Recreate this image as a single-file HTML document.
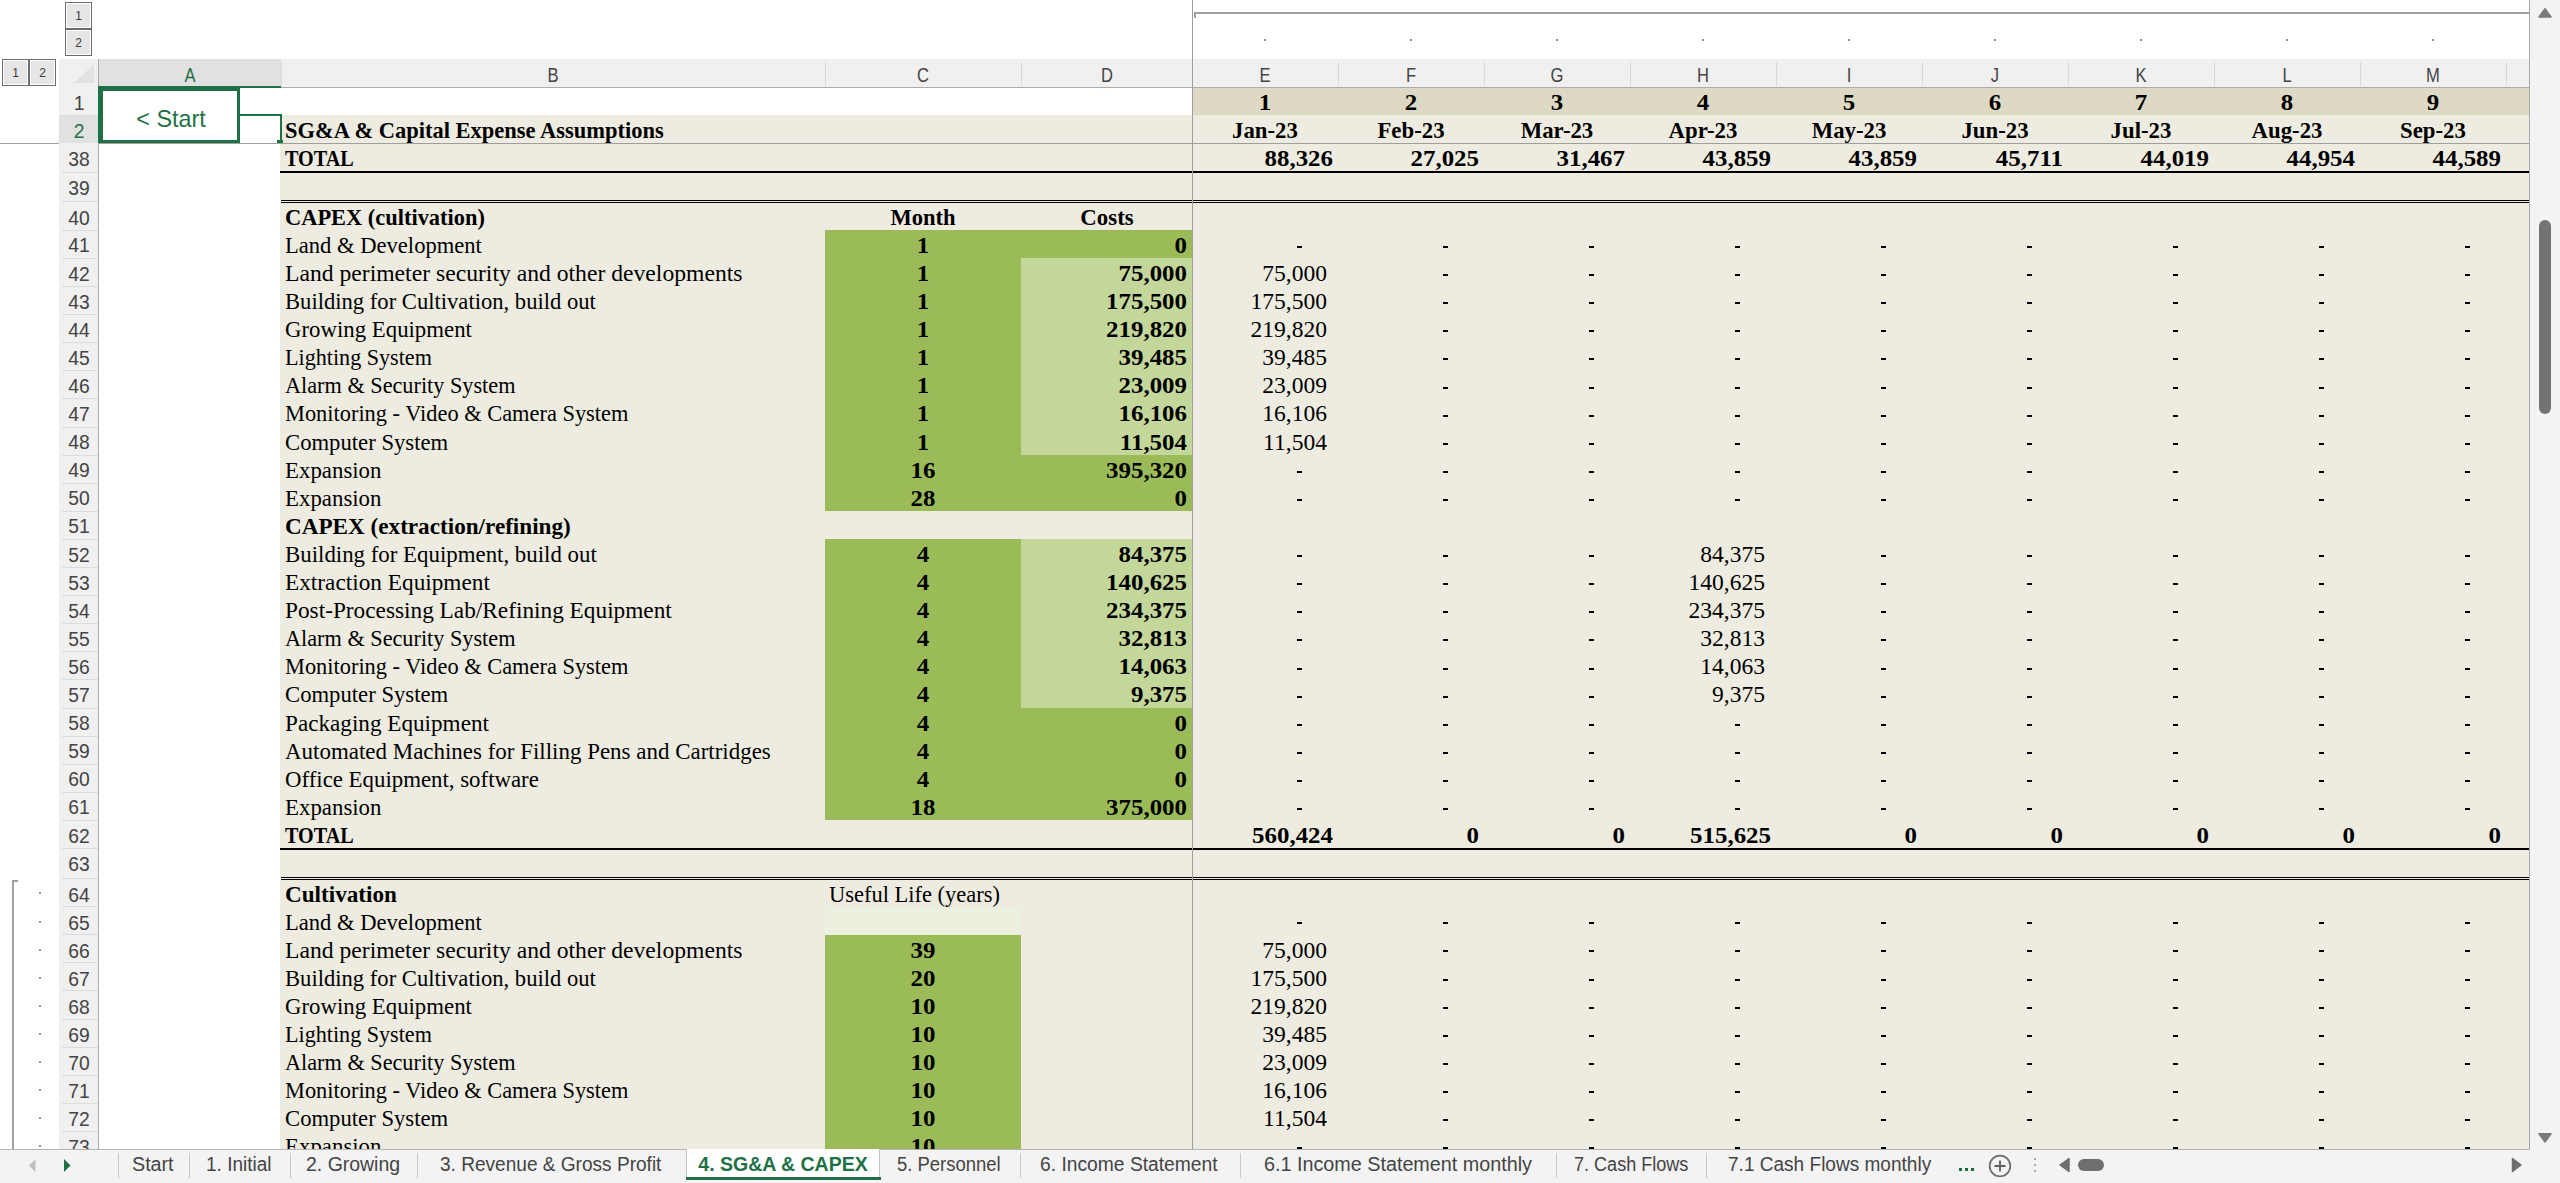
<!DOCTYPE html>
<html><head><meta charset="utf-8"><title>SG&amp;A &amp; CAPEX</title>
<style>
html,body{margin:0;padding:0;}
body{width:2560px;height:1183px;overflow:hidden;position:relative;background:#fff;}
body>div,body>svg{position:absolute;}
.t{white-space:nowrap;}
</style></head><body>
<div style="left:59.00px;top:59.00px;width:2470.00px;height:1090.00px;background:#FFFFFF;"></div>
<div style="left:280.00px;top:115.00px;width:2249.00px;height:1034.00px;background:#EEECE1;"></div>
<div style="left:1192.00px;top:87.00px;width:1337.00px;height:28.00px;background:#DDD9C4;"></div>
<div style="left:825.00px;top:230.00px;width:196.00px;height:28.00px;background:#9BBB59;"></div>
<div style="left:825.00px;top:258.00px;width:196.00px;height:29.00px;background:#9BBB59;"></div>
<div style="left:825.00px;top:287.00px;width:196.00px;height:28.00px;background:#9BBB59;"></div>
<div style="left:825.00px;top:315.00px;width:196.00px;height:28.00px;background:#9BBB59;"></div>
<div style="left:825.00px;top:343.00px;width:196.00px;height:28.00px;background:#9BBB59;"></div>
<div style="left:825.00px;top:371.00px;width:196.00px;height:28.00px;background:#9BBB59;"></div>
<div style="left:825.00px;top:399.00px;width:196.00px;height:28.00px;background:#9BBB59;"></div>
<div style="left:825.00px;top:427.00px;width:196.00px;height:28.00px;background:#9BBB59;"></div>
<div style="left:825.00px;top:455.00px;width:196.00px;height:28.00px;background:#9BBB59;"></div>
<div style="left:825.00px;top:483.00px;width:196.00px;height:28.00px;background:#9BBB59;"></div>
<div style="left:825.00px;top:539.00px;width:196.00px;height:29.00px;background:#9BBB59;"></div>
<div style="left:825.00px;top:568.00px;width:196.00px;height:28.00px;background:#9BBB59;"></div>
<div style="left:825.00px;top:596.00px;width:196.00px;height:28.00px;background:#9BBB59;"></div>
<div style="left:825.00px;top:624.00px;width:196.00px;height:28.00px;background:#9BBB59;"></div>
<div style="left:825.00px;top:652.00px;width:196.00px;height:28.00px;background:#9BBB59;"></div>
<div style="left:825.00px;top:680.00px;width:196.00px;height:28.00px;background:#9BBB59;"></div>
<div style="left:825.00px;top:708.00px;width:196.00px;height:28.00px;background:#9BBB59;"></div>
<div style="left:825.00px;top:736.00px;width:196.00px;height:28.00px;background:#9BBB59;"></div>
<div style="left:825.00px;top:764.00px;width:196.00px;height:28.00px;background:#9BBB59;"></div>
<div style="left:825.00px;top:792.00px;width:196.00px;height:28.00px;background:#9BBB59;"></div>
<div style="left:1021.00px;top:230.00px;width:171.00px;height:28.00px;background:#9BBB59;"></div>
<div style="left:1021.00px;top:455.00px;width:171.00px;height:28.00px;background:#9BBB59;"></div>
<div style="left:1021.00px;top:483.00px;width:171.00px;height:28.00px;background:#9BBB59;"></div>
<div style="left:1021.00px;top:708.00px;width:171.00px;height:28.00px;background:#9BBB59;"></div>
<div style="left:1021.00px;top:736.00px;width:171.00px;height:28.00px;background:#9BBB59;"></div>
<div style="left:1021.00px;top:764.00px;width:171.00px;height:28.00px;background:#9BBB59;"></div>
<div style="left:1021.00px;top:792.00px;width:171.00px;height:28.00px;background:#9BBB59;"></div>
<div style="left:1021.00px;top:258.00px;width:171.00px;height:29.00px;background:#C4D79B;"></div>
<div style="left:1021.00px;top:287.00px;width:171.00px;height:28.00px;background:#C4D79B;"></div>
<div style="left:1021.00px;top:315.00px;width:171.00px;height:28.00px;background:#C4D79B;"></div>
<div style="left:1021.00px;top:343.00px;width:171.00px;height:28.00px;background:#C4D79B;"></div>
<div style="left:1021.00px;top:371.00px;width:171.00px;height:28.00px;background:#C4D79B;"></div>
<div style="left:1021.00px;top:399.00px;width:171.00px;height:28.00px;background:#C4D79B;"></div>
<div style="left:1021.00px;top:427.00px;width:171.00px;height:28.00px;background:#C4D79B;"></div>
<div style="left:1021.00px;top:539.00px;width:171.00px;height:29.00px;background:#C4D79B;"></div>
<div style="left:1021.00px;top:568.00px;width:171.00px;height:28.00px;background:#C4D79B;"></div>
<div style="left:1021.00px;top:596.00px;width:171.00px;height:28.00px;background:#C4D79B;"></div>
<div style="left:1021.00px;top:624.00px;width:171.00px;height:28.00px;background:#C4D79B;"></div>
<div style="left:1021.00px;top:652.00px;width:171.00px;height:28.00px;background:#C4D79B;"></div>
<div style="left:1021.00px;top:680.00px;width:171.00px;height:28.00px;background:#C4D79B;"></div>
<div style="left:825.00px;top:907.00px;width:196.00px;height:28.00px;background:#EBF1DE;"></div>
<div style="left:825.00px;top:935.00px;width:196.00px;height:214.00px;background:#9BBB59;"></div>
<div style="left:280.00px;top:171.00px;width:2249.00px;height:2.00px;background:#000;"></div>
<div style="left:281.00px;top:200.00px;width:2248.00px;height:1.00px;background:#000;"></div>
<div style="left:281.00px;top:202.00px;width:2248.00px;height:1.00px;background:#000;"></div>
<div style="left:280.00px;top:848.00px;width:2249.00px;height:2.00px;background:#000;"></div>
<div style="left:281.00px;top:877.00px;width:2248.00px;height:1.00px;background:#000;"></div>
<div style="left:281.00px;top:879.00px;width:2248.00px;height:1.00px;background:#000;"></div>
<div class="t" style="left:285.40px;top:118.09px;width:900px;text-align:left;font-family:'Liberation Serif', serif;font-size:22.2px;line-height:26.64px;font-weight:bold;color:#000;transform:scaleX(1.0139111824505083);transform-origin:left 0;">SG&amp;A &amp; Capital Expense Assumptions</div>
<div class="t" style="left:285.40px;top:145.99px;width:900px;text-align:left;font-family:'Liberation Serif', serif;font-size:22.2px;line-height:26.64px;font-weight:bold;color:#000;transform:scaleX(0.9075297225891678);transform-origin:left 0;">TOTAL</div>
<div class="t" style="left:285.40px;top:204.99px;width:900px;text-align:left;font-family:'Liberation Serif', serif;font-size:22.2px;line-height:26.64px;font-weight:bold;color:#000;transform:scaleX(1.010611419909045);transform-origin:left 0;">CAPEX (cultivation)</div>
<div class="t" style="left:473.00px;top:204.99px;width:900px;text-align:center;font-family:'Liberation Serif', serif;font-size:22.2px;line-height:26.64px;font-weight:bold;color:#000;transform:scaleX(1.0171606864274572);transform-origin:center 0;">Month</div>
<div class="t" style="left:656.50px;top:204.99px;width:900px;text-align:center;font-family:'Liberation Serif', serif;font-size:22.2px;line-height:26.64px;font-weight:bold;color:#000;transform:scaleX(1.028957528957529);transform-origin:center 0;">Costs</div>
<div class="t" style="left:285.40px;top:232.89px;width:900px;text-align:left;font-family:'Liberation Serif', serif;font-size:22.2px;line-height:26.64px;font-weight:normal;color:#000;transform:scaleX(1.0175619834710745);transform-origin:left 0;">Land &amp; Development</div>
<div class="t" style="left:285.40px;top:260.99px;width:900px;text-align:left;font-family:'Liberation Serif', serif;font-size:22.2px;line-height:26.64px;font-weight:normal;color:#000;transform:scaleX(1.065409683426443);transform-origin:left 0;">Land perimeter security and other developments</div>
<div class="t" style="left:285.40px;top:289.09px;width:900px;text-align:left;font-family:'Liberation Serif', serif;font-size:22.2px;line-height:26.64px;font-weight:normal;color:#000;transform:scaleX(1.0190039318479687);transform-origin:left 0;">Building for Cultivation, build out</div>
<div class="t" style="left:285.40px;top:317.19px;width:900px;text-align:left;font-family:'Liberation Serif', serif;font-size:22.2px;line-height:26.64px;font-weight:normal;color:#000;transform:scaleX(1.02803738317757);transform-origin:left 0;">Growing Equipment</div>
<div class="t" style="left:285.40px;top:345.29px;width:900px;text-align:left;font-family:'Liberation Serif', serif;font-size:22.2px;line-height:26.64px;font-weight:normal;color:#000;transform:scaleX(0.9972862957937585);transform-origin:left 0;">Lighting System</div>
<div class="t" style="left:285.40px;top:373.39px;width:900px;text-align:left;font-family:'Liberation Serif', serif;font-size:22.2px;line-height:26.64px;font-weight:normal;color:#000;transform:scaleX(1.0026086956521738);transform-origin:left 0;">Alarm &amp; Security System</div>
<div class="t" style="left:285.40px;top:401.49px;width:900px;text-align:left;font-family:'Liberation Serif', serif;font-size:22.2px;line-height:26.64px;font-weight:normal;color:#000;transform:scaleX(1.0091042584434655);transform-origin:left 0;">Monitoring - Video &amp; Camera System</div>
<div class="t" style="left:285.40px;top:429.59px;width:900px;text-align:left;font-family:'Liberation Serif', serif;font-size:22.2px;line-height:26.64px;font-weight:normal;color:#000;transform:scaleX(1.0225422667501567);transform-origin:left 0;">Computer System</div>
<div class="t" style="left:285.40px;top:457.69px;width:900px;text-align:left;font-family:'Liberation Serif', serif;font-size:22.2px;line-height:26.64px;font-weight:normal;color:#000;transform:scaleX(1.0298826040554963);transform-origin:left 0;">Expansion</div>
<div class="t" style="left:285.40px;top:485.79px;width:900px;text-align:left;font-family:'Liberation Serif', serif;font-size:22.2px;line-height:26.64px;font-weight:normal;color:#000;transform:scaleX(1.0298826040554963);transform-origin:left 0;">Expansion</div>
<div class="t" style="left:285.40px;top:513.89px;width:900px;text-align:left;font-family:'Liberation Serif', serif;font-size:22.2px;line-height:26.64px;font-weight:bold;color:#000;transform:scaleX(1.0437956204379562);transform-origin:left 0;">CAPEX (extraction/refining)</div>
<div class="t" style="left:285.40px;top:541.99px;width:900px;text-align:left;font-family:'Liberation Serif', serif;font-size:22.2px;line-height:26.64px;font-weight:normal;color:#000;transform:scaleX(1.0303830911492735);transform-origin:left 0;">Building for Equipment, build out</div>
<div class="t" style="left:285.40px;top:570.09px;width:900px;text-align:left;font-family:'Liberation Serif', serif;font-size:22.2px;line-height:26.64px;font-weight:normal;color:#000;transform:scaleX(1.0491299897645854);transform-origin:left 0;">Extraction Equipment</div>
<div class="t" style="left:285.40px;top:598.19px;width:900px;text-align:left;font-family:'Liberation Serif', serif;font-size:22.2px;line-height:26.64px;font-weight:normal;color:#000;transform:scaleX(1.049633848657445);transform-origin:left 0;">Post-Processing Lab/Refining Equipment</div>
<div class="t" style="left:285.40px;top:626.29px;width:900px;text-align:left;font-family:'Liberation Serif', serif;font-size:22.2px;line-height:26.64px;font-weight:normal;color:#000;transform:scaleX(1.0026086956521738);transform-origin:left 0;">Alarm &amp; Security System</div>
<div class="t" style="left:285.40px;top:654.39px;width:900px;text-align:left;font-family:'Liberation Serif', serif;font-size:22.2px;line-height:26.64px;font-weight:normal;color:#000;transform:scaleX(1.0091042584434655);transform-origin:left 0;">Monitoring - Video &amp; Camera System</div>
<div class="t" style="left:285.40px;top:682.49px;width:900px;text-align:left;font-family:'Liberation Serif', serif;font-size:22.2px;line-height:26.64px;font-weight:normal;color:#000;transform:scaleX(1.0225422667501567);transform-origin:left 0;">Computer System</div>
<div class="t" style="left:285.40px;top:710.59px;width:900px;text-align:left;font-family:'Liberation Serif', serif;font-size:22.2px;line-height:26.64px;font-weight:normal;color:#000;transform:scaleX(1.0440122824974412);transform-origin:left 0;">Packaging Equipment</div>
<div class="t" style="left:285.40px;top:738.69px;width:900px;text-align:left;font-family:'Liberation Serif', serif;font-size:22.2px;line-height:26.64px;font-weight:normal;color:#000;transform:scaleX(1.0344827586206897);transform-origin:left 0;">Automated Machines for Filling Pens and Cartridges</div>
<div class="t" style="left:285.40px;top:766.79px;width:900px;text-align:left;font-family:'Liberation Serif', serif;font-size:22.2px;line-height:26.64px;font-weight:normal;color:#000;transform:scaleX(1.0291734197730955);transform-origin:left 0;">Office Equipment, software</div>
<div class="t" style="left:285.40px;top:794.89px;width:900px;text-align:left;font-family:'Liberation Serif', serif;font-size:22.2px;line-height:26.64px;font-weight:normal;color:#000;transform:scaleX(1.0298826040554963);transform-origin:left 0;">Expansion</div>
<div class="t" style="left:285.40px;top:822.99px;width:900px;text-align:left;font-family:'Liberation Serif', serif;font-size:22.2px;line-height:26.64px;font-weight:bold;color:#000;transform:scaleX(0.9075297225891678);transform-origin:left 0;">TOTAL</div>
<div class="t" style="left:285.40px;top:882.09px;width:900px;text-align:left;font-family:'Liberation Serif', serif;font-size:22.2px;line-height:26.64px;font-weight:bold;color:#000;transform:scaleX(1.043802423112768);transform-origin:left 0;">Cultivation</div>
<div class="t" style="left:829.20px;top:882.09px;width:900px;text-align:left;font-family:'Liberation Serif', serif;font-size:22.2px;line-height:26.64px;font-weight:normal;color:#000;transform:scaleX(1.0124333925399644);transform-origin:left 0;">Useful Life (years)</div>
<div class="t" style="left:285.40px;top:909.99px;width:900px;text-align:left;font-family:'Liberation Serif', serif;font-size:22.2px;line-height:26.64px;font-weight:normal;color:#000;transform:scaleX(1.0175619834710745);transform-origin:left 0;">Land &amp; Development</div>
<div class="t" style="left:285.40px;top:938.03px;width:900px;text-align:left;font-family:'Liberation Serif', serif;font-size:22.2px;line-height:26.64px;font-weight:normal;color:#000;transform:scaleX(1.065409683426443);transform-origin:left 0;">Land perimeter security and other developments</div>
<div class="t" style="left:285.40px;top:966.07px;width:900px;text-align:left;font-family:'Liberation Serif', serif;font-size:22.2px;line-height:26.64px;font-weight:normal;color:#000;transform:scaleX(1.0190039318479687);transform-origin:left 0;">Building for Cultivation, build out</div>
<div class="t" style="left:285.40px;top:994.11px;width:900px;text-align:left;font-family:'Liberation Serif', serif;font-size:22.2px;line-height:26.64px;font-weight:normal;color:#000;transform:scaleX(1.02803738317757);transform-origin:left 0;">Growing Equipment</div>
<div class="t" style="left:285.40px;top:1022.15px;width:900px;text-align:left;font-family:'Liberation Serif', serif;font-size:22.2px;line-height:26.64px;font-weight:normal;color:#000;transform:scaleX(0.9972862957937585);transform-origin:left 0;">Lighting System</div>
<div class="t" style="left:285.40px;top:1050.19px;width:900px;text-align:left;font-family:'Liberation Serif', serif;font-size:22.2px;line-height:26.64px;font-weight:normal;color:#000;transform:scaleX(1.0026086956521738);transform-origin:left 0;">Alarm &amp; Security System</div>
<div class="t" style="left:285.40px;top:1078.23px;width:900px;text-align:left;font-family:'Liberation Serif', serif;font-size:22.2px;line-height:26.64px;font-weight:normal;color:#000;transform:scaleX(1.0091042584434655);transform-origin:left 0;">Monitoring - Video &amp; Camera System</div>
<div class="t" style="left:285.40px;top:1106.27px;width:900px;text-align:left;font-family:'Liberation Serif', serif;font-size:22.2px;line-height:26.64px;font-weight:normal;color:#000;transform:scaleX(1.0225422667501567);transform-origin:left 0;">Computer System</div>
<div class="t" style="left:285.40px;top:1134.31px;width:900px;text-align:left;font-family:'Liberation Serif', serif;font-size:22.2px;line-height:26.64px;font-weight:normal;color:#000;transform:scaleX(1.0298826040554963);transform-origin:left 0;">Expansion</div>
<div class="t" style="left:473.00px;top:232.89px;width:900px;text-align:center;font-family:'Liberation Serif', serif;font-size:22.2px;line-height:26.64px;font-weight:bold;color:#000;transform:scaleX(1.123);transform-origin:center 0;">1</div>
<div class="t" style="left:473.00px;top:260.99px;width:900px;text-align:center;font-family:'Liberation Serif', serif;font-size:22.2px;line-height:26.64px;font-weight:bold;color:#000;transform:scaleX(1.123);transform-origin:center 0;">1</div>
<div class="t" style="left:473.00px;top:289.09px;width:900px;text-align:center;font-family:'Liberation Serif', serif;font-size:22.2px;line-height:26.64px;font-weight:bold;color:#000;transform:scaleX(1.123);transform-origin:center 0;">1</div>
<div class="t" style="left:473.00px;top:317.19px;width:900px;text-align:center;font-family:'Liberation Serif', serif;font-size:22.2px;line-height:26.64px;font-weight:bold;color:#000;transform:scaleX(1.123);transform-origin:center 0;">1</div>
<div class="t" style="left:473.00px;top:345.29px;width:900px;text-align:center;font-family:'Liberation Serif', serif;font-size:22.2px;line-height:26.64px;font-weight:bold;color:#000;transform:scaleX(1.123);transform-origin:center 0;">1</div>
<div class="t" style="left:473.00px;top:373.39px;width:900px;text-align:center;font-family:'Liberation Serif', serif;font-size:22.2px;line-height:26.64px;font-weight:bold;color:#000;transform:scaleX(1.123);transform-origin:center 0;">1</div>
<div class="t" style="left:473.00px;top:401.49px;width:900px;text-align:center;font-family:'Liberation Serif', serif;font-size:22.2px;line-height:26.64px;font-weight:bold;color:#000;transform:scaleX(1.123);transform-origin:center 0;">1</div>
<div class="t" style="left:473.00px;top:429.59px;width:900px;text-align:center;font-family:'Liberation Serif', serif;font-size:22.2px;line-height:26.64px;font-weight:bold;color:#000;transform:scaleX(1.123);transform-origin:center 0;">1</div>
<div class="t" style="left:473.00px;top:457.69px;width:900px;text-align:center;font-family:'Liberation Serif', serif;font-size:22.2px;line-height:26.64px;font-weight:bold;color:#000;transform:scaleX(1.123);transform-origin:center 0;">16</div>
<div class="t" style="left:473.00px;top:485.79px;width:900px;text-align:center;font-family:'Liberation Serif', serif;font-size:22.2px;line-height:26.64px;font-weight:bold;color:#000;transform:scaleX(1.123);transform-origin:center 0;">28</div>
<div class="t" style="left:473.00px;top:541.99px;width:900px;text-align:center;font-family:'Liberation Serif', serif;font-size:22.2px;line-height:26.64px;font-weight:bold;color:#000;transform:scaleX(1.123);transform-origin:center 0;">4</div>
<div class="t" style="left:473.00px;top:570.09px;width:900px;text-align:center;font-family:'Liberation Serif', serif;font-size:22.2px;line-height:26.64px;font-weight:bold;color:#000;transform:scaleX(1.123);transform-origin:center 0;">4</div>
<div class="t" style="left:473.00px;top:598.19px;width:900px;text-align:center;font-family:'Liberation Serif', serif;font-size:22.2px;line-height:26.64px;font-weight:bold;color:#000;transform:scaleX(1.123);transform-origin:center 0;">4</div>
<div class="t" style="left:473.00px;top:626.29px;width:900px;text-align:center;font-family:'Liberation Serif', serif;font-size:22.2px;line-height:26.64px;font-weight:bold;color:#000;transform:scaleX(1.123);transform-origin:center 0;">4</div>
<div class="t" style="left:473.00px;top:654.39px;width:900px;text-align:center;font-family:'Liberation Serif', serif;font-size:22.2px;line-height:26.64px;font-weight:bold;color:#000;transform:scaleX(1.123);transform-origin:center 0;">4</div>
<div class="t" style="left:473.00px;top:682.49px;width:900px;text-align:center;font-family:'Liberation Serif', serif;font-size:22.2px;line-height:26.64px;font-weight:bold;color:#000;transform:scaleX(1.123);transform-origin:center 0;">4</div>
<div class="t" style="left:473.00px;top:710.59px;width:900px;text-align:center;font-family:'Liberation Serif', serif;font-size:22.2px;line-height:26.64px;font-weight:bold;color:#000;transform:scaleX(1.123);transform-origin:center 0;">4</div>
<div class="t" style="left:473.00px;top:738.69px;width:900px;text-align:center;font-family:'Liberation Serif', serif;font-size:22.2px;line-height:26.64px;font-weight:bold;color:#000;transform:scaleX(1.123);transform-origin:center 0;">4</div>
<div class="t" style="left:473.00px;top:766.79px;width:900px;text-align:center;font-family:'Liberation Serif', serif;font-size:22.2px;line-height:26.64px;font-weight:bold;color:#000;transform:scaleX(1.123);transform-origin:center 0;">4</div>
<div class="t" style="left:473.00px;top:794.89px;width:900px;text-align:center;font-family:'Liberation Serif', serif;font-size:22.2px;line-height:26.64px;font-weight:bold;color:#000;transform:scaleX(1.123);transform-origin:center 0;">18</div>
<div class="t" style="left:473.00px;top:938.03px;width:900px;text-align:center;font-family:'Liberation Serif', serif;font-size:22.2px;line-height:26.64px;font-weight:bold;color:#000;transform:scaleX(1.123);transform-origin:center 0;">39</div>
<div class="t" style="left:473.00px;top:966.07px;width:900px;text-align:center;font-family:'Liberation Serif', serif;font-size:22.2px;line-height:26.64px;font-weight:bold;color:#000;transform:scaleX(1.123);transform-origin:center 0;">20</div>
<div class="t" style="left:473.00px;top:994.11px;width:900px;text-align:center;font-family:'Liberation Serif', serif;font-size:22.2px;line-height:26.64px;font-weight:bold;color:#000;transform:scaleX(1.123);transform-origin:center 0;">10</div>
<div class="t" style="left:473.00px;top:1022.15px;width:900px;text-align:center;font-family:'Liberation Serif', serif;font-size:22.2px;line-height:26.64px;font-weight:bold;color:#000;transform:scaleX(1.123);transform-origin:center 0;">10</div>
<div class="t" style="left:473.00px;top:1050.19px;width:900px;text-align:center;font-family:'Liberation Serif', serif;font-size:22.2px;line-height:26.64px;font-weight:bold;color:#000;transform:scaleX(1.123);transform-origin:center 0;">10</div>
<div class="t" style="left:473.00px;top:1078.23px;width:900px;text-align:center;font-family:'Liberation Serif', serif;font-size:22.2px;line-height:26.64px;font-weight:bold;color:#000;transform:scaleX(1.123);transform-origin:center 0;">10</div>
<div class="t" style="left:473.00px;top:1106.27px;width:900px;text-align:center;font-family:'Liberation Serif', serif;font-size:22.2px;line-height:26.64px;font-weight:bold;color:#000;transform:scaleX(1.123);transform-origin:center 0;">10</div>
<div class="t" style="left:473.00px;top:1134.31px;width:900px;text-align:center;font-family:'Liberation Serif', serif;font-size:22.2px;line-height:26.64px;font-weight:bold;color:#000;transform:scaleX(1.123);transform-origin:center 0;">10</div>
<div class="t" style="left:287.00px;top:232.89px;width:900px;text-align:right;font-family:'Liberation Serif', serif;font-size:22.2px;line-height:26.64px;font-weight:bold;color:#000;transform:scaleX(1.123);transform-origin:right 0;">0</div>
<div class="t" style="left:287.00px;top:260.99px;width:900px;text-align:right;font-family:'Liberation Serif', serif;font-size:22.2px;line-height:26.64px;font-weight:bold;color:#000;transform:scaleX(1.123);transform-origin:right 0;">75,000</div>
<div class="t" style="left:287.00px;top:289.09px;width:900px;text-align:right;font-family:'Liberation Serif', serif;font-size:22.2px;line-height:26.64px;font-weight:bold;color:#000;transform:scaleX(1.123);transform-origin:right 0;">175,500</div>
<div class="t" style="left:287.00px;top:317.19px;width:900px;text-align:right;font-family:'Liberation Serif', serif;font-size:22.2px;line-height:26.64px;font-weight:bold;color:#000;transform:scaleX(1.123);transform-origin:right 0;">219,820</div>
<div class="t" style="left:287.00px;top:345.29px;width:900px;text-align:right;font-family:'Liberation Serif', serif;font-size:22.2px;line-height:26.64px;font-weight:bold;color:#000;transform:scaleX(1.123);transform-origin:right 0;">39,485</div>
<div class="t" style="left:287.00px;top:373.39px;width:900px;text-align:right;font-family:'Liberation Serif', serif;font-size:22.2px;line-height:26.64px;font-weight:bold;color:#000;transform:scaleX(1.123);transform-origin:right 0;">23,009</div>
<div class="t" style="left:287.00px;top:401.49px;width:900px;text-align:right;font-family:'Liberation Serif', serif;font-size:22.2px;line-height:26.64px;font-weight:bold;color:#000;transform:scaleX(1.123);transform-origin:right 0;">16,106</div>
<div class="t" style="left:287.00px;top:429.59px;width:900px;text-align:right;font-family:'Liberation Serif', serif;font-size:22.2px;line-height:26.64px;font-weight:bold;color:#000;transform:scaleX(1.123);transform-origin:right 0;">11,504</div>
<div class="t" style="left:287.00px;top:457.69px;width:900px;text-align:right;font-family:'Liberation Serif', serif;font-size:22.2px;line-height:26.64px;font-weight:bold;color:#000;transform:scaleX(1.123);transform-origin:right 0;">395,320</div>
<div class="t" style="left:287.00px;top:485.79px;width:900px;text-align:right;font-family:'Liberation Serif', serif;font-size:22.2px;line-height:26.64px;font-weight:bold;color:#000;transform:scaleX(1.123);transform-origin:right 0;">0</div>
<div class="t" style="left:287.00px;top:541.99px;width:900px;text-align:right;font-family:'Liberation Serif', serif;font-size:22.2px;line-height:26.64px;font-weight:bold;color:#000;transform:scaleX(1.123);transform-origin:right 0;">84,375</div>
<div class="t" style="left:287.00px;top:570.09px;width:900px;text-align:right;font-family:'Liberation Serif', serif;font-size:22.2px;line-height:26.64px;font-weight:bold;color:#000;transform:scaleX(1.123);transform-origin:right 0;">140,625</div>
<div class="t" style="left:287.00px;top:598.19px;width:900px;text-align:right;font-family:'Liberation Serif', serif;font-size:22.2px;line-height:26.64px;font-weight:bold;color:#000;transform:scaleX(1.123);transform-origin:right 0;">234,375</div>
<div class="t" style="left:287.00px;top:626.29px;width:900px;text-align:right;font-family:'Liberation Serif', serif;font-size:22.2px;line-height:26.64px;font-weight:bold;color:#000;transform:scaleX(1.123);transform-origin:right 0;">32,813</div>
<div class="t" style="left:287.00px;top:654.39px;width:900px;text-align:right;font-family:'Liberation Serif', serif;font-size:22.2px;line-height:26.64px;font-weight:bold;color:#000;transform:scaleX(1.123);transform-origin:right 0;">14,063</div>
<div class="t" style="left:287.00px;top:682.49px;width:900px;text-align:right;font-family:'Liberation Serif', serif;font-size:22.2px;line-height:26.64px;font-weight:bold;color:#000;transform:scaleX(1.123);transform-origin:right 0;">9,375</div>
<div class="t" style="left:287.00px;top:710.59px;width:900px;text-align:right;font-family:'Liberation Serif', serif;font-size:22.2px;line-height:26.64px;font-weight:bold;color:#000;transform:scaleX(1.123);transform-origin:right 0;">0</div>
<div class="t" style="left:287.00px;top:738.69px;width:900px;text-align:right;font-family:'Liberation Serif', serif;font-size:22.2px;line-height:26.64px;font-weight:bold;color:#000;transform:scaleX(1.123);transform-origin:right 0;">0</div>
<div class="t" style="left:287.00px;top:766.79px;width:900px;text-align:right;font-family:'Liberation Serif', serif;font-size:22.2px;line-height:26.64px;font-weight:bold;color:#000;transform:scaleX(1.123);transform-origin:right 0;">0</div>
<div class="t" style="left:287.00px;top:794.89px;width:900px;text-align:right;font-family:'Liberation Serif', serif;font-size:22.2px;line-height:26.64px;font-weight:bold;color:#000;transform:scaleX(1.123);transform-origin:right 0;">375,000</div>
<div class="t" style="left:815.00px;top:90.29px;width:900px;text-align:center;font-family:'Liberation Serif', serif;font-size:22.2px;line-height:26.64px;font-weight:bold;color:#000;transform:scaleX(1.123);transform-origin:center 0;">1</div>
<div class="t" style="left:961.00px;top:90.29px;width:900px;text-align:center;font-family:'Liberation Serif', serif;font-size:22.2px;line-height:26.64px;font-weight:bold;color:#000;transform:scaleX(1.123);transform-origin:center 0;">2</div>
<div class="t" style="left:1107.00px;top:90.29px;width:900px;text-align:center;font-family:'Liberation Serif', serif;font-size:22.2px;line-height:26.64px;font-weight:bold;color:#000;transform:scaleX(1.123);transform-origin:center 0;">3</div>
<div class="t" style="left:1253.00px;top:90.29px;width:900px;text-align:center;font-family:'Liberation Serif', serif;font-size:22.2px;line-height:26.64px;font-weight:bold;color:#000;transform:scaleX(1.123);transform-origin:center 0;">4</div>
<div class="t" style="left:1399.00px;top:90.29px;width:900px;text-align:center;font-family:'Liberation Serif', serif;font-size:22.2px;line-height:26.64px;font-weight:bold;color:#000;transform:scaleX(1.123);transform-origin:center 0;">5</div>
<div class="t" style="left:1545.00px;top:90.29px;width:900px;text-align:center;font-family:'Liberation Serif', serif;font-size:22.2px;line-height:26.64px;font-weight:bold;color:#000;transform:scaleX(1.123);transform-origin:center 0;">6</div>
<div class="t" style="left:1691.00px;top:90.29px;width:900px;text-align:center;font-family:'Liberation Serif', serif;font-size:22.2px;line-height:26.64px;font-weight:bold;color:#000;transform:scaleX(1.123);transform-origin:center 0;">7</div>
<div class="t" style="left:1837.00px;top:90.29px;width:900px;text-align:center;font-family:'Liberation Serif', serif;font-size:22.2px;line-height:26.64px;font-weight:bold;color:#000;transform:scaleX(1.123);transform-origin:center 0;">8</div>
<div class="t" style="left:1983.00px;top:90.29px;width:900px;text-align:center;font-family:'Liberation Serif', serif;font-size:22.2px;line-height:26.64px;font-weight:bold;color:#000;transform:scaleX(1.123);transform-origin:center 0;">9</div>
<div class="t" style="left:815.00px;top:118.09px;width:900px;text-align:center;font-family:'Liberation Serif', serif;font-size:22.2px;line-height:26.64px;font-weight:bold;color:#000;transform:scaleX(1.027);transform-origin:center 0;">Jan-23</div>
<div class="t" style="left:961.00px;top:118.09px;width:900px;text-align:center;font-family:'Liberation Serif', serif;font-size:22.2px;line-height:26.64px;font-weight:bold;color:#000;transform:scaleX(1.027);transform-origin:center 0;">Feb-23</div>
<div class="t" style="left:1107.00px;top:118.09px;width:900px;text-align:center;font-family:'Liberation Serif', serif;font-size:22.2px;line-height:26.64px;font-weight:bold;color:#000;transform:scaleX(1.027);transform-origin:center 0;">Mar-23</div>
<div class="t" style="left:1253.00px;top:118.09px;width:900px;text-align:center;font-family:'Liberation Serif', serif;font-size:22.2px;line-height:26.64px;font-weight:bold;color:#000;transform:scaleX(1.027);transform-origin:center 0;">Apr-23</div>
<div class="t" style="left:1399.00px;top:118.09px;width:900px;text-align:center;font-family:'Liberation Serif', serif;font-size:22.2px;line-height:26.64px;font-weight:bold;color:#000;transform:scaleX(1.027);transform-origin:center 0;">May-23</div>
<div class="t" style="left:1545.00px;top:118.09px;width:900px;text-align:center;font-family:'Liberation Serif', serif;font-size:22.2px;line-height:26.64px;font-weight:bold;color:#000;transform:scaleX(1.027);transform-origin:center 0;">Jun-23</div>
<div class="t" style="left:1691.00px;top:118.09px;width:900px;text-align:center;font-family:'Liberation Serif', serif;font-size:22.2px;line-height:26.64px;font-weight:bold;color:#000;transform:scaleX(1.027);transform-origin:center 0;">Jul-23</div>
<div class="t" style="left:1837.00px;top:118.09px;width:900px;text-align:center;font-family:'Liberation Serif', serif;font-size:22.2px;line-height:26.64px;font-weight:bold;color:#000;transform:scaleX(1.027);transform-origin:center 0;">Aug-23</div>
<div class="t" style="left:1983.00px;top:118.09px;width:900px;text-align:center;font-family:'Liberation Serif', serif;font-size:22.2px;line-height:26.64px;font-weight:bold;color:#000;transform:scaleX(1.027);transform-origin:center 0;">Sep-23</div>
<div class="t" style="left:433.00px;top:145.99px;width:900px;text-align:right;font-family:'Liberation Serif', serif;font-size:22.2px;line-height:26.64px;font-weight:bold;color:#000;transform:scaleX(1.123);transform-origin:right 0;">88,326</div>
<div class="t" style="left:579.00px;top:145.99px;width:900px;text-align:right;font-family:'Liberation Serif', serif;font-size:22.2px;line-height:26.64px;font-weight:bold;color:#000;transform:scaleX(1.123);transform-origin:right 0;">27,025</div>
<div class="t" style="left:725.00px;top:145.99px;width:900px;text-align:right;font-family:'Liberation Serif', serif;font-size:22.2px;line-height:26.64px;font-weight:bold;color:#000;transform:scaleX(1.123);transform-origin:right 0;">31,467</div>
<div class="t" style="left:871.00px;top:145.99px;width:900px;text-align:right;font-family:'Liberation Serif', serif;font-size:22.2px;line-height:26.64px;font-weight:bold;color:#000;transform:scaleX(1.123);transform-origin:right 0;">43,859</div>
<div class="t" style="left:1017.00px;top:145.99px;width:900px;text-align:right;font-family:'Liberation Serif', serif;font-size:22.2px;line-height:26.64px;font-weight:bold;color:#000;transform:scaleX(1.123);transform-origin:right 0;">43,859</div>
<div class="t" style="left:1163.00px;top:145.99px;width:900px;text-align:right;font-family:'Liberation Serif', serif;font-size:22.2px;line-height:26.64px;font-weight:bold;color:#000;transform:scaleX(1.123);transform-origin:right 0;">45,711</div>
<div class="t" style="left:1309.00px;top:145.99px;width:900px;text-align:right;font-family:'Liberation Serif', serif;font-size:22.2px;line-height:26.64px;font-weight:bold;color:#000;transform:scaleX(1.123);transform-origin:right 0;">44,019</div>
<div class="t" style="left:1455.00px;top:145.99px;width:900px;text-align:right;font-family:'Liberation Serif', serif;font-size:22.2px;line-height:26.64px;font-weight:bold;color:#000;transform:scaleX(1.123);transform-origin:right 0;">44,954</div>
<div class="t" style="left:1601.00px;top:145.99px;width:900px;text-align:right;font-family:'Liberation Serif', serif;font-size:22.2px;line-height:26.64px;font-weight:bold;color:#000;transform:scaleX(1.123);transform-origin:right 0;">44,589</div>
<div class="t" style="left:433.00px;top:822.99px;width:900px;text-align:right;font-family:'Liberation Serif', serif;font-size:22.2px;line-height:26.64px;font-weight:bold;color:#000;transform:scaleX(1.123);transform-origin:right 0;">560,424</div>
<div class="t" style="left:579.00px;top:822.99px;width:900px;text-align:right;font-family:'Liberation Serif', serif;font-size:22.2px;line-height:26.64px;font-weight:bold;color:#000;transform:scaleX(1.123);transform-origin:right 0;">0</div>
<div class="t" style="left:725.00px;top:822.99px;width:900px;text-align:right;font-family:'Liberation Serif', serif;font-size:22.2px;line-height:26.64px;font-weight:bold;color:#000;transform:scaleX(1.123);transform-origin:right 0;">0</div>
<div class="t" style="left:871.00px;top:822.99px;width:900px;text-align:right;font-family:'Liberation Serif', serif;font-size:22.2px;line-height:26.64px;font-weight:bold;color:#000;transform:scaleX(1.123);transform-origin:right 0;">515,625</div>
<div class="t" style="left:1017.00px;top:822.99px;width:900px;text-align:right;font-family:'Liberation Serif', serif;font-size:22.2px;line-height:26.64px;font-weight:bold;color:#000;transform:scaleX(1.123);transform-origin:right 0;">0</div>
<div class="t" style="left:1163.00px;top:822.99px;width:900px;text-align:right;font-family:'Liberation Serif', serif;font-size:22.2px;line-height:26.64px;font-weight:bold;color:#000;transform:scaleX(1.123);transform-origin:right 0;">0</div>
<div class="t" style="left:1309.00px;top:822.99px;width:900px;text-align:right;font-family:'Liberation Serif', serif;font-size:22.2px;line-height:26.64px;font-weight:bold;color:#000;transform:scaleX(1.123);transform-origin:right 0;">0</div>
<div class="t" style="left:1455.00px;top:822.99px;width:900px;text-align:right;font-family:'Liberation Serif', serif;font-size:22.2px;line-height:26.64px;font-weight:bold;color:#000;transform:scaleX(1.123);transform-origin:right 0;">0</div>
<div class="t" style="left:1601.00px;top:822.99px;width:900px;text-align:right;font-family:'Liberation Serif', serif;font-size:22.2px;line-height:26.64px;font-weight:bold;color:#000;transform:scaleX(1.123);transform-origin:right 0;">0</div>
<div style="left:1297.00px;top:246.00px;width:5.00px;height:2.00px;background:#000;"></div>
<div style="left:1443.00px;top:246.00px;width:5.00px;height:2.00px;background:#000;"></div>
<div style="left:1589.00px;top:246.00px;width:5.00px;height:2.00px;background:#000;"></div>
<div style="left:1735.00px;top:246.00px;width:5.00px;height:2.00px;background:#000;"></div>
<div style="left:1881.00px;top:246.00px;width:5.00px;height:2.00px;background:#000;"></div>
<div style="left:2027.00px;top:246.00px;width:5.00px;height:2.00px;background:#000;"></div>
<div style="left:2173.00px;top:246.00px;width:5.00px;height:2.00px;background:#000;"></div>
<div style="left:2319.00px;top:246.00px;width:5.00px;height:2.00px;background:#000;"></div>
<div style="left:2465.00px;top:246.00px;width:5.00px;height:2.00px;background:#000;"></div>
<div class="t" style="left:427.00px;top:260.99px;width:900px;text-align:right;font-family:'Liberation Serif', serif;font-size:22.2px;line-height:26.64px;font-weight:normal;color:#000;transform:scaleX(1.062);transform-origin:right 0;">75,000</div>
<div style="left:1443.00px;top:274.00px;width:5.00px;height:2.00px;background:#000;"></div>
<div style="left:1589.00px;top:274.00px;width:5.00px;height:2.00px;background:#000;"></div>
<div style="left:1735.00px;top:274.00px;width:5.00px;height:2.00px;background:#000;"></div>
<div style="left:1881.00px;top:274.00px;width:5.00px;height:2.00px;background:#000;"></div>
<div style="left:2027.00px;top:274.00px;width:5.00px;height:2.00px;background:#000;"></div>
<div style="left:2173.00px;top:274.00px;width:5.00px;height:2.00px;background:#000;"></div>
<div style="left:2319.00px;top:274.00px;width:5.00px;height:2.00px;background:#000;"></div>
<div style="left:2465.00px;top:274.00px;width:5.00px;height:2.00px;background:#000;"></div>
<div class="t" style="left:427.00px;top:289.09px;width:900px;text-align:right;font-family:'Liberation Serif', serif;font-size:22.2px;line-height:26.64px;font-weight:normal;color:#000;transform:scaleX(1.062);transform-origin:right 0;">175,500</div>
<div style="left:1443.00px;top:302.00px;width:5.00px;height:2.00px;background:#000;"></div>
<div style="left:1589.00px;top:302.00px;width:5.00px;height:2.00px;background:#000;"></div>
<div style="left:1735.00px;top:302.00px;width:5.00px;height:2.00px;background:#000;"></div>
<div style="left:1881.00px;top:302.00px;width:5.00px;height:2.00px;background:#000;"></div>
<div style="left:2027.00px;top:302.00px;width:5.00px;height:2.00px;background:#000;"></div>
<div style="left:2173.00px;top:302.00px;width:5.00px;height:2.00px;background:#000;"></div>
<div style="left:2319.00px;top:302.00px;width:5.00px;height:2.00px;background:#000;"></div>
<div style="left:2465.00px;top:302.00px;width:5.00px;height:2.00px;background:#000;"></div>
<div class="t" style="left:427.00px;top:317.19px;width:900px;text-align:right;font-family:'Liberation Serif', serif;font-size:22.2px;line-height:26.64px;font-weight:normal;color:#000;transform:scaleX(1.062);transform-origin:right 0;">219,820</div>
<div style="left:1443.00px;top:330.00px;width:5.00px;height:2.00px;background:#000;"></div>
<div style="left:1589.00px;top:330.00px;width:5.00px;height:2.00px;background:#000;"></div>
<div style="left:1735.00px;top:330.00px;width:5.00px;height:2.00px;background:#000;"></div>
<div style="left:1881.00px;top:330.00px;width:5.00px;height:2.00px;background:#000;"></div>
<div style="left:2027.00px;top:330.00px;width:5.00px;height:2.00px;background:#000;"></div>
<div style="left:2173.00px;top:330.00px;width:5.00px;height:2.00px;background:#000;"></div>
<div style="left:2319.00px;top:330.00px;width:5.00px;height:2.00px;background:#000;"></div>
<div style="left:2465.00px;top:330.00px;width:5.00px;height:2.00px;background:#000;"></div>
<div class="t" style="left:427.00px;top:345.29px;width:900px;text-align:right;font-family:'Liberation Serif', serif;font-size:22.2px;line-height:26.64px;font-weight:normal;color:#000;transform:scaleX(1.062);transform-origin:right 0;">39,485</div>
<div style="left:1443.00px;top:358.00px;width:5.00px;height:2.00px;background:#000;"></div>
<div style="left:1589.00px;top:358.00px;width:5.00px;height:2.00px;background:#000;"></div>
<div style="left:1735.00px;top:358.00px;width:5.00px;height:2.00px;background:#000;"></div>
<div style="left:1881.00px;top:358.00px;width:5.00px;height:2.00px;background:#000;"></div>
<div style="left:2027.00px;top:358.00px;width:5.00px;height:2.00px;background:#000;"></div>
<div style="left:2173.00px;top:358.00px;width:5.00px;height:2.00px;background:#000;"></div>
<div style="left:2319.00px;top:358.00px;width:5.00px;height:2.00px;background:#000;"></div>
<div style="left:2465.00px;top:358.00px;width:5.00px;height:2.00px;background:#000;"></div>
<div class="t" style="left:427.00px;top:373.39px;width:900px;text-align:right;font-family:'Liberation Serif', serif;font-size:22.2px;line-height:26.64px;font-weight:normal;color:#000;transform:scaleX(1.062);transform-origin:right 0;">23,009</div>
<div style="left:1443.00px;top:387.00px;width:5.00px;height:2.00px;background:#000;"></div>
<div style="left:1589.00px;top:387.00px;width:5.00px;height:2.00px;background:#000;"></div>
<div style="left:1735.00px;top:387.00px;width:5.00px;height:2.00px;background:#000;"></div>
<div style="left:1881.00px;top:387.00px;width:5.00px;height:2.00px;background:#000;"></div>
<div style="left:2027.00px;top:387.00px;width:5.00px;height:2.00px;background:#000;"></div>
<div style="left:2173.00px;top:387.00px;width:5.00px;height:2.00px;background:#000;"></div>
<div style="left:2319.00px;top:387.00px;width:5.00px;height:2.00px;background:#000;"></div>
<div style="left:2465.00px;top:387.00px;width:5.00px;height:2.00px;background:#000;"></div>
<div class="t" style="left:427.00px;top:401.49px;width:900px;text-align:right;font-family:'Liberation Serif', serif;font-size:22.2px;line-height:26.64px;font-weight:normal;color:#000;transform:scaleX(1.062);transform-origin:right 0;">16,106</div>
<div style="left:1443.00px;top:415.00px;width:5.00px;height:2.00px;background:#000;"></div>
<div style="left:1589.00px;top:415.00px;width:5.00px;height:2.00px;background:#000;"></div>
<div style="left:1735.00px;top:415.00px;width:5.00px;height:2.00px;background:#000;"></div>
<div style="left:1881.00px;top:415.00px;width:5.00px;height:2.00px;background:#000;"></div>
<div style="left:2027.00px;top:415.00px;width:5.00px;height:2.00px;background:#000;"></div>
<div style="left:2173.00px;top:415.00px;width:5.00px;height:2.00px;background:#000;"></div>
<div style="left:2319.00px;top:415.00px;width:5.00px;height:2.00px;background:#000;"></div>
<div style="left:2465.00px;top:415.00px;width:5.00px;height:2.00px;background:#000;"></div>
<div class="t" style="left:427.00px;top:429.59px;width:900px;text-align:right;font-family:'Liberation Serif', serif;font-size:22.2px;line-height:26.64px;font-weight:normal;color:#000;transform:scaleX(1.062);transform-origin:right 0;">11,504</div>
<div style="left:1443.00px;top:443.00px;width:5.00px;height:2.00px;background:#000;"></div>
<div style="left:1589.00px;top:443.00px;width:5.00px;height:2.00px;background:#000;"></div>
<div style="left:1735.00px;top:443.00px;width:5.00px;height:2.00px;background:#000;"></div>
<div style="left:1881.00px;top:443.00px;width:5.00px;height:2.00px;background:#000;"></div>
<div style="left:2027.00px;top:443.00px;width:5.00px;height:2.00px;background:#000;"></div>
<div style="left:2173.00px;top:443.00px;width:5.00px;height:2.00px;background:#000;"></div>
<div style="left:2319.00px;top:443.00px;width:5.00px;height:2.00px;background:#000;"></div>
<div style="left:2465.00px;top:443.00px;width:5.00px;height:2.00px;background:#000;"></div>
<div style="left:1297.00px;top:471.00px;width:5.00px;height:2.00px;background:#000;"></div>
<div style="left:1443.00px;top:471.00px;width:5.00px;height:2.00px;background:#000;"></div>
<div style="left:1589.00px;top:471.00px;width:5.00px;height:2.00px;background:#000;"></div>
<div style="left:1735.00px;top:471.00px;width:5.00px;height:2.00px;background:#000;"></div>
<div style="left:1881.00px;top:471.00px;width:5.00px;height:2.00px;background:#000;"></div>
<div style="left:2027.00px;top:471.00px;width:5.00px;height:2.00px;background:#000;"></div>
<div style="left:2173.00px;top:471.00px;width:5.00px;height:2.00px;background:#000;"></div>
<div style="left:2319.00px;top:471.00px;width:5.00px;height:2.00px;background:#000;"></div>
<div style="left:2465.00px;top:471.00px;width:5.00px;height:2.00px;background:#000;"></div>
<div style="left:1297.00px;top:499.00px;width:5.00px;height:2.00px;background:#000;"></div>
<div style="left:1443.00px;top:499.00px;width:5.00px;height:2.00px;background:#000;"></div>
<div style="left:1589.00px;top:499.00px;width:5.00px;height:2.00px;background:#000;"></div>
<div style="left:1735.00px;top:499.00px;width:5.00px;height:2.00px;background:#000;"></div>
<div style="left:1881.00px;top:499.00px;width:5.00px;height:2.00px;background:#000;"></div>
<div style="left:2027.00px;top:499.00px;width:5.00px;height:2.00px;background:#000;"></div>
<div style="left:2173.00px;top:499.00px;width:5.00px;height:2.00px;background:#000;"></div>
<div style="left:2319.00px;top:499.00px;width:5.00px;height:2.00px;background:#000;"></div>
<div style="left:2465.00px;top:499.00px;width:5.00px;height:2.00px;background:#000;"></div>
<div style="left:1297.00px;top:555.00px;width:5.00px;height:2.00px;background:#000;"></div>
<div style="left:1443.00px;top:555.00px;width:5.00px;height:2.00px;background:#000;"></div>
<div style="left:1589.00px;top:555.00px;width:5.00px;height:2.00px;background:#000;"></div>
<div class="t" style="left:865.00px;top:541.99px;width:900px;text-align:right;font-family:'Liberation Serif', serif;font-size:22.2px;line-height:26.64px;font-weight:normal;color:#000;transform:scaleX(1.062);transform-origin:right 0;">84,375</div>
<div style="left:1881.00px;top:555.00px;width:5.00px;height:2.00px;background:#000;"></div>
<div style="left:2027.00px;top:555.00px;width:5.00px;height:2.00px;background:#000;"></div>
<div style="left:2173.00px;top:555.00px;width:5.00px;height:2.00px;background:#000;"></div>
<div style="left:2319.00px;top:555.00px;width:5.00px;height:2.00px;background:#000;"></div>
<div style="left:2465.00px;top:555.00px;width:5.00px;height:2.00px;background:#000;"></div>
<div style="left:1297.00px;top:583.00px;width:5.00px;height:2.00px;background:#000;"></div>
<div style="left:1443.00px;top:583.00px;width:5.00px;height:2.00px;background:#000;"></div>
<div style="left:1589.00px;top:583.00px;width:5.00px;height:2.00px;background:#000;"></div>
<div class="t" style="left:865.00px;top:570.09px;width:900px;text-align:right;font-family:'Liberation Serif', serif;font-size:22.2px;line-height:26.64px;font-weight:normal;color:#000;transform:scaleX(1.062);transform-origin:right 0;">140,625</div>
<div style="left:1881.00px;top:583.00px;width:5.00px;height:2.00px;background:#000;"></div>
<div style="left:2027.00px;top:583.00px;width:5.00px;height:2.00px;background:#000;"></div>
<div style="left:2173.00px;top:583.00px;width:5.00px;height:2.00px;background:#000;"></div>
<div style="left:2319.00px;top:583.00px;width:5.00px;height:2.00px;background:#000;"></div>
<div style="left:2465.00px;top:583.00px;width:5.00px;height:2.00px;background:#000;"></div>
<div style="left:1297.00px;top:611.00px;width:5.00px;height:2.00px;background:#000;"></div>
<div style="left:1443.00px;top:611.00px;width:5.00px;height:2.00px;background:#000;"></div>
<div style="left:1589.00px;top:611.00px;width:5.00px;height:2.00px;background:#000;"></div>
<div class="t" style="left:865.00px;top:598.19px;width:900px;text-align:right;font-family:'Liberation Serif', serif;font-size:22.2px;line-height:26.64px;font-weight:normal;color:#000;transform:scaleX(1.062);transform-origin:right 0;">234,375</div>
<div style="left:1881.00px;top:611.00px;width:5.00px;height:2.00px;background:#000;"></div>
<div style="left:2027.00px;top:611.00px;width:5.00px;height:2.00px;background:#000;"></div>
<div style="left:2173.00px;top:611.00px;width:5.00px;height:2.00px;background:#000;"></div>
<div style="left:2319.00px;top:611.00px;width:5.00px;height:2.00px;background:#000;"></div>
<div style="left:2465.00px;top:611.00px;width:5.00px;height:2.00px;background:#000;"></div>
<div style="left:1297.00px;top:639.00px;width:5.00px;height:2.00px;background:#000;"></div>
<div style="left:1443.00px;top:639.00px;width:5.00px;height:2.00px;background:#000;"></div>
<div style="left:1589.00px;top:639.00px;width:5.00px;height:2.00px;background:#000;"></div>
<div class="t" style="left:865.00px;top:626.29px;width:900px;text-align:right;font-family:'Liberation Serif', serif;font-size:22.2px;line-height:26.64px;font-weight:normal;color:#000;transform:scaleX(1.062);transform-origin:right 0;">32,813</div>
<div style="left:1881.00px;top:639.00px;width:5.00px;height:2.00px;background:#000;"></div>
<div style="left:2027.00px;top:639.00px;width:5.00px;height:2.00px;background:#000;"></div>
<div style="left:2173.00px;top:639.00px;width:5.00px;height:2.00px;background:#000;"></div>
<div style="left:2319.00px;top:639.00px;width:5.00px;height:2.00px;background:#000;"></div>
<div style="left:2465.00px;top:639.00px;width:5.00px;height:2.00px;background:#000;"></div>
<div style="left:1297.00px;top:668.00px;width:5.00px;height:2.00px;background:#000;"></div>
<div style="left:1443.00px;top:668.00px;width:5.00px;height:2.00px;background:#000;"></div>
<div style="left:1589.00px;top:668.00px;width:5.00px;height:2.00px;background:#000;"></div>
<div class="t" style="left:865.00px;top:654.39px;width:900px;text-align:right;font-family:'Liberation Serif', serif;font-size:22.2px;line-height:26.64px;font-weight:normal;color:#000;transform:scaleX(1.062);transform-origin:right 0;">14,063</div>
<div style="left:1881.00px;top:668.00px;width:5.00px;height:2.00px;background:#000;"></div>
<div style="left:2027.00px;top:668.00px;width:5.00px;height:2.00px;background:#000;"></div>
<div style="left:2173.00px;top:668.00px;width:5.00px;height:2.00px;background:#000;"></div>
<div style="left:2319.00px;top:668.00px;width:5.00px;height:2.00px;background:#000;"></div>
<div style="left:2465.00px;top:668.00px;width:5.00px;height:2.00px;background:#000;"></div>
<div style="left:1297.00px;top:696.00px;width:5.00px;height:2.00px;background:#000;"></div>
<div style="left:1443.00px;top:696.00px;width:5.00px;height:2.00px;background:#000;"></div>
<div style="left:1589.00px;top:696.00px;width:5.00px;height:2.00px;background:#000;"></div>
<div class="t" style="left:865.00px;top:682.49px;width:900px;text-align:right;font-family:'Liberation Serif', serif;font-size:22.2px;line-height:26.64px;font-weight:normal;color:#000;transform:scaleX(1.062);transform-origin:right 0;">9,375</div>
<div style="left:1881.00px;top:696.00px;width:5.00px;height:2.00px;background:#000;"></div>
<div style="left:2027.00px;top:696.00px;width:5.00px;height:2.00px;background:#000;"></div>
<div style="left:2173.00px;top:696.00px;width:5.00px;height:2.00px;background:#000;"></div>
<div style="left:2319.00px;top:696.00px;width:5.00px;height:2.00px;background:#000;"></div>
<div style="left:2465.00px;top:696.00px;width:5.00px;height:2.00px;background:#000;"></div>
<div style="left:1297.00px;top:724.00px;width:5.00px;height:2.00px;background:#000;"></div>
<div style="left:1443.00px;top:724.00px;width:5.00px;height:2.00px;background:#000;"></div>
<div style="left:1589.00px;top:724.00px;width:5.00px;height:2.00px;background:#000;"></div>
<div style="left:1735.00px;top:724.00px;width:5.00px;height:2.00px;background:#000;"></div>
<div style="left:1881.00px;top:724.00px;width:5.00px;height:2.00px;background:#000;"></div>
<div style="left:2027.00px;top:724.00px;width:5.00px;height:2.00px;background:#000;"></div>
<div style="left:2173.00px;top:724.00px;width:5.00px;height:2.00px;background:#000;"></div>
<div style="left:2319.00px;top:724.00px;width:5.00px;height:2.00px;background:#000;"></div>
<div style="left:2465.00px;top:724.00px;width:5.00px;height:2.00px;background:#000;"></div>
<div style="left:1297.00px;top:752.00px;width:5.00px;height:2.00px;background:#000;"></div>
<div style="left:1443.00px;top:752.00px;width:5.00px;height:2.00px;background:#000;"></div>
<div style="left:1589.00px;top:752.00px;width:5.00px;height:2.00px;background:#000;"></div>
<div style="left:1735.00px;top:752.00px;width:5.00px;height:2.00px;background:#000;"></div>
<div style="left:1881.00px;top:752.00px;width:5.00px;height:2.00px;background:#000;"></div>
<div style="left:2027.00px;top:752.00px;width:5.00px;height:2.00px;background:#000;"></div>
<div style="left:2173.00px;top:752.00px;width:5.00px;height:2.00px;background:#000;"></div>
<div style="left:2319.00px;top:752.00px;width:5.00px;height:2.00px;background:#000;"></div>
<div style="left:2465.00px;top:752.00px;width:5.00px;height:2.00px;background:#000;"></div>
<div style="left:1297.00px;top:780.00px;width:5.00px;height:2.00px;background:#000;"></div>
<div style="left:1443.00px;top:780.00px;width:5.00px;height:2.00px;background:#000;"></div>
<div style="left:1589.00px;top:780.00px;width:5.00px;height:2.00px;background:#000;"></div>
<div style="left:1735.00px;top:780.00px;width:5.00px;height:2.00px;background:#000;"></div>
<div style="left:1881.00px;top:780.00px;width:5.00px;height:2.00px;background:#000;"></div>
<div style="left:2027.00px;top:780.00px;width:5.00px;height:2.00px;background:#000;"></div>
<div style="left:2173.00px;top:780.00px;width:5.00px;height:2.00px;background:#000;"></div>
<div style="left:2319.00px;top:780.00px;width:5.00px;height:2.00px;background:#000;"></div>
<div style="left:2465.00px;top:780.00px;width:5.00px;height:2.00px;background:#000;"></div>
<div style="left:1297.00px;top:808.00px;width:5.00px;height:2.00px;background:#000;"></div>
<div style="left:1443.00px;top:808.00px;width:5.00px;height:2.00px;background:#000;"></div>
<div style="left:1589.00px;top:808.00px;width:5.00px;height:2.00px;background:#000;"></div>
<div style="left:1735.00px;top:808.00px;width:5.00px;height:2.00px;background:#000;"></div>
<div style="left:1881.00px;top:808.00px;width:5.00px;height:2.00px;background:#000;"></div>
<div style="left:2027.00px;top:808.00px;width:5.00px;height:2.00px;background:#000;"></div>
<div style="left:2173.00px;top:808.00px;width:5.00px;height:2.00px;background:#000;"></div>
<div style="left:2319.00px;top:808.00px;width:5.00px;height:2.00px;background:#000;"></div>
<div style="left:2465.00px;top:808.00px;width:5.00px;height:2.00px;background:#000;"></div>
<div style="left:1297.00px;top:922.00px;width:5.00px;height:2.00px;background:#000;"></div>
<div style="left:1443.00px;top:922.00px;width:5.00px;height:2.00px;background:#000;"></div>
<div style="left:1589.00px;top:922.00px;width:5.00px;height:2.00px;background:#000;"></div>
<div style="left:1735.00px;top:922.00px;width:5.00px;height:2.00px;background:#000;"></div>
<div style="left:1881.00px;top:922.00px;width:5.00px;height:2.00px;background:#000;"></div>
<div style="left:2027.00px;top:922.00px;width:5.00px;height:2.00px;background:#000;"></div>
<div style="left:2173.00px;top:922.00px;width:5.00px;height:2.00px;background:#000;"></div>
<div style="left:2319.00px;top:922.00px;width:5.00px;height:2.00px;background:#000;"></div>
<div style="left:2465.00px;top:922.00px;width:5.00px;height:2.00px;background:#000;"></div>
<div class="t" style="left:427.00px;top:938.03px;width:900px;text-align:right;font-family:'Liberation Serif', serif;font-size:22.2px;line-height:26.64px;font-weight:normal;color:#000;transform:scaleX(1.062);transform-origin:right 0;">75,000</div>
<div style="left:1443.00px;top:950.00px;width:5.00px;height:2.00px;background:#000;"></div>
<div style="left:1589.00px;top:950.00px;width:5.00px;height:2.00px;background:#000;"></div>
<div style="left:1735.00px;top:950.00px;width:5.00px;height:2.00px;background:#000;"></div>
<div style="left:1881.00px;top:950.00px;width:5.00px;height:2.00px;background:#000;"></div>
<div style="left:2027.00px;top:950.00px;width:5.00px;height:2.00px;background:#000;"></div>
<div style="left:2173.00px;top:950.00px;width:5.00px;height:2.00px;background:#000;"></div>
<div style="left:2319.00px;top:950.00px;width:5.00px;height:2.00px;background:#000;"></div>
<div style="left:2465.00px;top:950.00px;width:5.00px;height:2.00px;background:#000;"></div>
<div class="t" style="left:427.00px;top:966.07px;width:900px;text-align:right;font-family:'Liberation Serif', serif;font-size:22.2px;line-height:26.64px;font-weight:normal;color:#000;transform:scaleX(1.062);transform-origin:right 0;">175,500</div>
<div style="left:1443.00px;top:979.00px;width:5.00px;height:2.00px;background:#000;"></div>
<div style="left:1589.00px;top:979.00px;width:5.00px;height:2.00px;background:#000;"></div>
<div style="left:1735.00px;top:979.00px;width:5.00px;height:2.00px;background:#000;"></div>
<div style="left:1881.00px;top:979.00px;width:5.00px;height:2.00px;background:#000;"></div>
<div style="left:2027.00px;top:979.00px;width:5.00px;height:2.00px;background:#000;"></div>
<div style="left:2173.00px;top:979.00px;width:5.00px;height:2.00px;background:#000;"></div>
<div style="left:2319.00px;top:979.00px;width:5.00px;height:2.00px;background:#000;"></div>
<div style="left:2465.00px;top:979.00px;width:5.00px;height:2.00px;background:#000;"></div>
<div class="t" style="left:427.00px;top:994.11px;width:900px;text-align:right;font-family:'Liberation Serif', serif;font-size:22.2px;line-height:26.64px;font-weight:normal;color:#000;transform:scaleX(1.062);transform-origin:right 0;">219,820</div>
<div style="left:1443.00px;top:1007.00px;width:5.00px;height:2.00px;background:#000;"></div>
<div style="left:1589.00px;top:1007.00px;width:5.00px;height:2.00px;background:#000;"></div>
<div style="left:1735.00px;top:1007.00px;width:5.00px;height:2.00px;background:#000;"></div>
<div style="left:1881.00px;top:1007.00px;width:5.00px;height:2.00px;background:#000;"></div>
<div style="left:2027.00px;top:1007.00px;width:5.00px;height:2.00px;background:#000;"></div>
<div style="left:2173.00px;top:1007.00px;width:5.00px;height:2.00px;background:#000;"></div>
<div style="left:2319.00px;top:1007.00px;width:5.00px;height:2.00px;background:#000;"></div>
<div style="left:2465.00px;top:1007.00px;width:5.00px;height:2.00px;background:#000;"></div>
<div class="t" style="left:427.00px;top:1022.15px;width:900px;text-align:right;font-family:'Liberation Serif', serif;font-size:22.2px;line-height:26.64px;font-weight:normal;color:#000;transform:scaleX(1.062);transform-origin:right 0;">39,485</div>
<div style="left:1443.00px;top:1035.00px;width:5.00px;height:2.00px;background:#000;"></div>
<div style="left:1589.00px;top:1035.00px;width:5.00px;height:2.00px;background:#000;"></div>
<div style="left:1735.00px;top:1035.00px;width:5.00px;height:2.00px;background:#000;"></div>
<div style="left:1881.00px;top:1035.00px;width:5.00px;height:2.00px;background:#000;"></div>
<div style="left:2027.00px;top:1035.00px;width:5.00px;height:2.00px;background:#000;"></div>
<div style="left:2173.00px;top:1035.00px;width:5.00px;height:2.00px;background:#000;"></div>
<div style="left:2319.00px;top:1035.00px;width:5.00px;height:2.00px;background:#000;"></div>
<div style="left:2465.00px;top:1035.00px;width:5.00px;height:2.00px;background:#000;"></div>
<div class="t" style="left:427.00px;top:1050.19px;width:900px;text-align:right;font-family:'Liberation Serif', serif;font-size:22.2px;line-height:26.64px;font-weight:normal;color:#000;transform:scaleX(1.062);transform-origin:right 0;">23,009</div>
<div style="left:1443.00px;top:1063.00px;width:5.00px;height:2.00px;background:#000;"></div>
<div style="left:1589.00px;top:1063.00px;width:5.00px;height:2.00px;background:#000;"></div>
<div style="left:1735.00px;top:1063.00px;width:5.00px;height:2.00px;background:#000;"></div>
<div style="left:1881.00px;top:1063.00px;width:5.00px;height:2.00px;background:#000;"></div>
<div style="left:2027.00px;top:1063.00px;width:5.00px;height:2.00px;background:#000;"></div>
<div style="left:2173.00px;top:1063.00px;width:5.00px;height:2.00px;background:#000;"></div>
<div style="left:2319.00px;top:1063.00px;width:5.00px;height:2.00px;background:#000;"></div>
<div style="left:2465.00px;top:1063.00px;width:5.00px;height:2.00px;background:#000;"></div>
<div class="t" style="left:427.00px;top:1078.23px;width:900px;text-align:right;font-family:'Liberation Serif', serif;font-size:22.2px;line-height:26.64px;font-weight:normal;color:#000;transform:scaleX(1.062);transform-origin:right 0;">16,106</div>
<div style="left:1443.00px;top:1091.00px;width:5.00px;height:2.00px;background:#000;"></div>
<div style="left:1589.00px;top:1091.00px;width:5.00px;height:2.00px;background:#000;"></div>
<div style="left:1735.00px;top:1091.00px;width:5.00px;height:2.00px;background:#000;"></div>
<div style="left:1881.00px;top:1091.00px;width:5.00px;height:2.00px;background:#000;"></div>
<div style="left:2027.00px;top:1091.00px;width:5.00px;height:2.00px;background:#000;"></div>
<div style="left:2173.00px;top:1091.00px;width:5.00px;height:2.00px;background:#000;"></div>
<div style="left:2319.00px;top:1091.00px;width:5.00px;height:2.00px;background:#000;"></div>
<div style="left:2465.00px;top:1091.00px;width:5.00px;height:2.00px;background:#000;"></div>
<div class="t" style="left:427.00px;top:1106.27px;width:900px;text-align:right;font-family:'Liberation Serif', serif;font-size:22.2px;line-height:26.64px;font-weight:normal;color:#000;transform:scaleX(1.062);transform-origin:right 0;">11,504</div>
<div style="left:1443.00px;top:1119.00px;width:5.00px;height:2.00px;background:#000;"></div>
<div style="left:1589.00px;top:1119.00px;width:5.00px;height:2.00px;background:#000;"></div>
<div style="left:1735.00px;top:1119.00px;width:5.00px;height:2.00px;background:#000;"></div>
<div style="left:1881.00px;top:1119.00px;width:5.00px;height:2.00px;background:#000;"></div>
<div style="left:2027.00px;top:1119.00px;width:5.00px;height:2.00px;background:#000;"></div>
<div style="left:2173.00px;top:1119.00px;width:5.00px;height:2.00px;background:#000;"></div>
<div style="left:2319.00px;top:1119.00px;width:5.00px;height:2.00px;background:#000;"></div>
<div style="left:2465.00px;top:1119.00px;width:5.00px;height:2.00px;background:#000;"></div>
<div style="left:1297.00px;top:1147.00px;width:5.00px;height:2.00px;background:#000;"></div>
<div style="left:1443.00px;top:1147.00px;width:5.00px;height:2.00px;background:#000;"></div>
<div style="left:1589.00px;top:1147.00px;width:5.00px;height:2.00px;background:#000;"></div>
<div style="left:1735.00px;top:1147.00px;width:5.00px;height:2.00px;background:#000;"></div>
<div style="left:1881.00px;top:1147.00px;width:5.00px;height:2.00px;background:#000;"></div>
<div style="left:2027.00px;top:1147.00px;width:5.00px;height:2.00px;background:#000;"></div>
<div style="left:2173.00px;top:1147.00px;width:5.00px;height:2.00px;background:#000;"></div>
<div style="left:2319.00px;top:1147.00px;width:5.00px;height:2.00px;background:#000;"></div>
<div style="left:2465.00px;top:1147.00px;width:5.00px;height:2.00px;background:#000;"></div>
<div style="left:0.00px;top:143.00px;width:2529.00px;height:1.00px;background:#9E9E9E;"></div>
<div style="left:1192.00px;top:0.00px;width:1.00px;height:1149.00px;background:#9E9E9E;"></div>
<div style="left:59.00px;top:59.00px;width:2470.00px;height:28.00px;background:#F0F0F0;"></div>
<div style="left:98.00px;top:59.00px;width:183.00px;height:28.00px;background:#E1E1E1;"></div>
<div style="left:59.00px;top:87.00px;width:2470.00px;height:1.00px;background:#ABABAB;"></div>
<div style="left:98.00px;top:86.00px;width:183.00px;height:2.00px;background:#1E7145;"></div>
<svg style="position:absolute;left:74px;top:64px" width="21" height="20"><polygon points="20,0 20,19 0,19" fill="#E2E2E2"/></svg>
<div style="left:281.00px;top:62.00px;width:1.00px;height:24.00px;background:#D9D9D9;"></div>
<div class="t" style="left:-260.50px;top:63.54px;width:900px;text-align:center;font-family:'Liberation Sans', sans-serif;font-size:19.5px;line-height:23.40px;font-weight:normal;color:#1E7145;transform:scaleX(0.85);transform-origin:center 0;">A</div>
<div style="left:825.00px;top:62.00px;width:1.00px;height:24.00px;background:#D9D9D9;"></div>
<div class="t" style="left:103.00px;top:63.54px;width:900px;text-align:center;font-family:'Liberation Sans', sans-serif;font-size:19.5px;line-height:23.40px;font-weight:normal;color:#444;transform:scaleX(0.85);transform-origin:center 0;">B</div>
<div style="left:1021.00px;top:62.00px;width:1.00px;height:24.00px;background:#D9D9D9;"></div>
<div class="t" style="left:473.00px;top:63.54px;width:900px;text-align:center;font-family:'Liberation Sans', sans-serif;font-size:19.5px;line-height:23.40px;font-weight:normal;color:#444;transform:scaleX(0.85);transform-origin:center 0;">C</div>
<div style="left:1192.00px;top:62.00px;width:1.00px;height:24.00px;background:#D9D9D9;"></div>
<div class="t" style="left:656.50px;top:63.54px;width:900px;text-align:center;font-family:'Liberation Sans', sans-serif;font-size:19.5px;line-height:23.40px;font-weight:normal;color:#444;transform:scaleX(0.85);transform-origin:center 0;">D</div>
<div style="left:1338.00px;top:62.00px;width:1.00px;height:24.00px;background:#D9D9D9;"></div>
<div class="t" style="left:815.00px;top:63.54px;width:900px;text-align:center;font-family:'Liberation Sans', sans-serif;font-size:19.5px;line-height:23.40px;font-weight:normal;color:#444;transform:scaleX(0.85);transform-origin:center 0;">E</div>
<div style="left:1484.00px;top:62.00px;width:1.00px;height:24.00px;background:#D9D9D9;"></div>
<div class="t" style="left:961.00px;top:63.54px;width:900px;text-align:center;font-family:'Liberation Sans', sans-serif;font-size:19.5px;line-height:23.40px;font-weight:normal;color:#444;transform:scaleX(0.85);transform-origin:center 0;">F</div>
<div style="left:1630.00px;top:62.00px;width:1.00px;height:24.00px;background:#D9D9D9;"></div>
<div class="t" style="left:1107.00px;top:63.54px;width:900px;text-align:center;font-family:'Liberation Sans', sans-serif;font-size:19.5px;line-height:23.40px;font-weight:normal;color:#444;transform:scaleX(0.85);transform-origin:center 0;">G</div>
<div style="left:1776.00px;top:62.00px;width:1.00px;height:24.00px;background:#D9D9D9;"></div>
<div class="t" style="left:1253.00px;top:63.54px;width:900px;text-align:center;font-family:'Liberation Sans', sans-serif;font-size:19.5px;line-height:23.40px;font-weight:normal;color:#444;transform:scaleX(0.85);transform-origin:center 0;">H</div>
<div style="left:1922.00px;top:62.00px;width:1.00px;height:24.00px;background:#D9D9D9;"></div>
<div class="t" style="left:1399.00px;top:63.54px;width:900px;text-align:center;font-family:'Liberation Sans', sans-serif;font-size:19.5px;line-height:23.40px;font-weight:normal;color:#444;transform:scaleX(0.85);transform-origin:center 0;">I</div>
<div style="left:2068.00px;top:62.00px;width:1.00px;height:24.00px;background:#D9D9D9;"></div>
<div class="t" style="left:1545.00px;top:63.54px;width:900px;text-align:center;font-family:'Liberation Sans', sans-serif;font-size:19.5px;line-height:23.40px;font-weight:normal;color:#444;transform:scaleX(0.85);transform-origin:center 0;">J</div>
<div style="left:2214.00px;top:62.00px;width:1.00px;height:24.00px;background:#D9D9D9;"></div>
<div class="t" style="left:1691.00px;top:63.54px;width:900px;text-align:center;font-family:'Liberation Sans', sans-serif;font-size:19.5px;line-height:23.40px;font-weight:normal;color:#444;transform:scaleX(0.85);transform-origin:center 0;">K</div>
<div style="left:2360.00px;top:62.00px;width:1.00px;height:24.00px;background:#D9D9D9;"></div>
<div class="t" style="left:1837.00px;top:63.54px;width:900px;text-align:center;font-family:'Liberation Sans', sans-serif;font-size:19.5px;line-height:23.40px;font-weight:normal;color:#444;transform:scaleX(0.85);transform-origin:center 0;">L</div>
<div style="left:2506.00px;top:62.00px;width:1.00px;height:24.00px;background:#D9D9D9;"></div>
<div class="t" style="left:1983.00px;top:63.54px;width:900px;text-align:center;font-family:'Liberation Sans', sans-serif;font-size:19.5px;line-height:23.40px;font-weight:normal;color:#444;transform:scaleX(0.85);transform-origin:center 0;">M</div>
<div style="left:98.00px;top:59.00px;width:1.00px;height:28.00px;background:#A8A8A8;"></div>
<div style="left:1192.00px;top:0.00px;width:1.00px;height:1149.00px;background:#9E9E9E;"></div>
<div style="left:59.00px;top:87.00px;width:39.00px;height:1062.00px;background:#F0F0F0;"></div>
<div style="left:59.00px;top:115.00px;width:39.00px;height:28.00px;background:#E1E1E1;"></div>
<div style="left:98.00px;top:87.00px;width:1.00px;height:1062.00px;background:#A8A8A8;"></div>
<div style="left:62.00px;top:115.00px;width:36.00px;height:1.00px;background:#DCDCDC;"></div>
<div class="t" style="left:-371.00px;top:91.83px;width:900px;text-align:center;font-family:'Liberation Sans', sans-serif;font-size:19.3px;line-height:23.16px;font-weight:normal;color:#444;">1</div>
<div class="t" style="left:-371.00px;top:119.63px;width:900px;text-align:center;font-family:'Liberation Sans', sans-serif;font-size:19.3px;line-height:23.16px;font-weight:normal;color:#1E7145;">2</div>
<div style="left:62.00px;top:172.00px;width:36.00px;height:1.00px;background:#DCDCDC;"></div>
<div class="t" style="left:-371.00px;top:147.53px;width:900px;text-align:center;font-family:'Liberation Sans', sans-serif;font-size:19.3px;line-height:23.16px;font-weight:normal;color:#444;">38</div>
<div style="left:62.00px;top:201.00px;width:36.00px;height:1.00px;background:#DCDCDC;"></div>
<div class="t" style="left:-371.00px;top:176.73px;width:900px;text-align:center;font-family:'Liberation Sans', sans-serif;font-size:19.3px;line-height:23.16px;font-weight:normal;color:#444;">39</div>
<div style="left:62.00px;top:230.00px;width:36.00px;height:1.00px;background:#DCDCDC;"></div>
<div class="t" style="left:-371.00px;top:206.53px;width:900px;text-align:center;font-family:'Liberation Sans', sans-serif;font-size:19.3px;line-height:23.16px;font-weight:normal;color:#444;">40</div>
<div style="left:62.00px;top:258.00px;width:36.00px;height:1.00px;background:#DCDCDC;"></div>
<div class="t" style="left:-371.00px;top:234.43px;width:900px;text-align:center;font-family:'Liberation Sans', sans-serif;font-size:19.3px;line-height:23.16px;font-weight:normal;color:#444;">41</div>
<div style="left:62.00px;top:286.00px;width:36.00px;height:1.00px;background:#DCDCDC;"></div>
<div class="t" style="left:-371.00px;top:262.53px;width:900px;text-align:center;font-family:'Liberation Sans', sans-serif;font-size:19.3px;line-height:23.16px;font-weight:normal;color:#444;">42</div>
<div style="left:62.00px;top:314.00px;width:36.00px;height:1.00px;background:#DCDCDC;"></div>
<div class="t" style="left:-371.00px;top:290.63px;width:900px;text-align:center;font-family:'Liberation Sans', sans-serif;font-size:19.3px;line-height:23.16px;font-weight:normal;color:#444;">43</div>
<div style="left:62.00px;top:342.00px;width:36.00px;height:1.00px;background:#DCDCDC;"></div>
<div class="t" style="left:-371.00px;top:318.73px;width:900px;text-align:center;font-family:'Liberation Sans', sans-serif;font-size:19.3px;line-height:23.16px;font-weight:normal;color:#444;">44</div>
<div style="left:62.00px;top:370.00px;width:36.00px;height:1.00px;background:#DCDCDC;"></div>
<div class="t" style="left:-371.00px;top:346.83px;width:900px;text-align:center;font-family:'Liberation Sans', sans-serif;font-size:19.3px;line-height:23.16px;font-weight:normal;color:#444;">45</div>
<div style="left:62.00px;top:398.00px;width:36.00px;height:1.00px;background:#DCDCDC;"></div>
<div class="t" style="left:-371.00px;top:374.93px;width:900px;text-align:center;font-family:'Liberation Sans', sans-serif;font-size:19.3px;line-height:23.16px;font-weight:normal;color:#444;">46</div>
<div style="left:62.00px;top:427.00px;width:36.00px;height:1.00px;background:#DCDCDC;"></div>
<div class="t" style="left:-371.00px;top:403.03px;width:900px;text-align:center;font-family:'Liberation Sans', sans-serif;font-size:19.3px;line-height:23.16px;font-weight:normal;color:#444;">47</div>
<div style="left:62.00px;top:455.00px;width:36.00px;height:1.00px;background:#DCDCDC;"></div>
<div class="t" style="left:-371.00px;top:431.13px;width:900px;text-align:center;font-family:'Liberation Sans', sans-serif;font-size:19.3px;line-height:23.16px;font-weight:normal;color:#444;">48</div>
<div style="left:62.00px;top:483.00px;width:36.00px;height:1.00px;background:#DCDCDC;"></div>
<div class="t" style="left:-371.00px;top:459.23px;width:900px;text-align:center;font-family:'Liberation Sans', sans-serif;font-size:19.3px;line-height:23.16px;font-weight:normal;color:#444;">49</div>
<div style="left:62.00px;top:511.00px;width:36.00px;height:1.00px;background:#DCDCDC;"></div>
<div class="t" style="left:-371.00px;top:487.33px;width:900px;text-align:center;font-family:'Liberation Sans', sans-serif;font-size:19.3px;line-height:23.16px;font-weight:normal;color:#444;">50</div>
<div style="left:62.00px;top:539.00px;width:36.00px;height:1.00px;background:#DCDCDC;"></div>
<div class="t" style="left:-371.00px;top:515.43px;width:900px;text-align:center;font-family:'Liberation Sans', sans-serif;font-size:19.3px;line-height:23.16px;font-weight:normal;color:#444;">51</div>
<div style="left:62.00px;top:567.00px;width:36.00px;height:1.00px;background:#DCDCDC;"></div>
<div class="t" style="left:-371.00px;top:543.53px;width:900px;text-align:center;font-family:'Liberation Sans', sans-serif;font-size:19.3px;line-height:23.16px;font-weight:normal;color:#444;">52</div>
<div style="left:62.00px;top:595.00px;width:36.00px;height:1.00px;background:#DCDCDC;"></div>
<div class="t" style="left:-371.00px;top:571.63px;width:900px;text-align:center;font-family:'Liberation Sans', sans-serif;font-size:19.3px;line-height:23.16px;font-weight:normal;color:#444;">53</div>
<div style="left:62.00px;top:623.00px;width:36.00px;height:1.00px;background:#DCDCDC;"></div>
<div class="t" style="left:-371.00px;top:599.73px;width:900px;text-align:center;font-family:'Liberation Sans', sans-serif;font-size:19.3px;line-height:23.16px;font-weight:normal;color:#444;">54</div>
<div style="left:62.00px;top:651.00px;width:36.00px;height:1.00px;background:#DCDCDC;"></div>
<div class="t" style="left:-371.00px;top:627.83px;width:900px;text-align:center;font-family:'Liberation Sans', sans-serif;font-size:19.3px;line-height:23.16px;font-weight:normal;color:#444;">55</div>
<div style="left:62.00px;top:679.00px;width:36.00px;height:1.00px;background:#DCDCDC;"></div>
<div class="t" style="left:-371.00px;top:655.93px;width:900px;text-align:center;font-family:'Liberation Sans', sans-serif;font-size:19.3px;line-height:23.16px;font-weight:normal;color:#444;">56</div>
<div style="left:62.00px;top:708.00px;width:36.00px;height:1.00px;background:#DCDCDC;"></div>
<div class="t" style="left:-371.00px;top:684.03px;width:900px;text-align:center;font-family:'Liberation Sans', sans-serif;font-size:19.3px;line-height:23.16px;font-weight:normal;color:#444;">57</div>
<div style="left:62.00px;top:736.00px;width:36.00px;height:1.00px;background:#DCDCDC;"></div>
<div class="t" style="left:-371.00px;top:712.13px;width:900px;text-align:center;font-family:'Liberation Sans', sans-serif;font-size:19.3px;line-height:23.16px;font-weight:normal;color:#444;">58</div>
<div style="left:62.00px;top:764.00px;width:36.00px;height:1.00px;background:#DCDCDC;"></div>
<div class="t" style="left:-371.00px;top:740.23px;width:900px;text-align:center;font-family:'Liberation Sans', sans-serif;font-size:19.3px;line-height:23.16px;font-weight:normal;color:#444;">59</div>
<div style="left:62.00px;top:792.00px;width:36.00px;height:1.00px;background:#DCDCDC;"></div>
<div class="t" style="left:-371.00px;top:768.33px;width:900px;text-align:center;font-family:'Liberation Sans', sans-serif;font-size:19.3px;line-height:23.16px;font-weight:normal;color:#444;">60</div>
<div style="left:62.00px;top:820.00px;width:36.00px;height:1.00px;background:#DCDCDC;"></div>
<div class="t" style="left:-371.00px;top:796.43px;width:900px;text-align:center;font-family:'Liberation Sans', sans-serif;font-size:19.3px;line-height:23.16px;font-weight:normal;color:#444;">61</div>
<div style="left:62.00px;top:848.00px;width:36.00px;height:1.00px;background:#DCDCDC;"></div>
<div class="t" style="left:-371.00px;top:824.53px;width:900px;text-align:center;font-family:'Liberation Sans', sans-serif;font-size:19.3px;line-height:23.16px;font-weight:normal;color:#444;">62</div>
<div style="left:62.00px;top:878.00px;width:36.00px;height:1.00px;background:#DCDCDC;"></div>
<div class="t" style="left:-371.00px;top:853.23px;width:900px;text-align:center;font-family:'Liberation Sans', sans-serif;font-size:19.3px;line-height:23.16px;font-weight:normal;color:#444;">63</div>
<div style="left:62.00px;top:906.00px;width:36.00px;height:1.00px;background:#DCDCDC;"></div>
<div class="t" style="left:-371.00px;top:883.63px;width:900px;text-align:center;font-family:'Liberation Sans', sans-serif;font-size:19.3px;line-height:23.16px;font-weight:normal;color:#444;">64</div>
<div style="left:62.00px;top:934.00px;width:36.00px;height:1.00px;background:#DCDCDC;"></div>
<div class="t" style="left:-371.00px;top:911.53px;width:900px;text-align:center;font-family:'Liberation Sans', sans-serif;font-size:19.3px;line-height:23.16px;font-weight:normal;color:#444;">65</div>
<div style="left:62.00px;top:962.00px;width:36.00px;height:1.00px;background:#DCDCDC;"></div>
<div class="t" style="left:-371.00px;top:939.57px;width:900px;text-align:center;font-family:'Liberation Sans', sans-serif;font-size:19.3px;line-height:23.16px;font-weight:normal;color:#444;">66</div>
<div style="left:62.00px;top:990.00px;width:36.00px;height:1.00px;background:#DCDCDC;"></div>
<div class="t" style="left:-371.00px;top:967.61px;width:900px;text-align:center;font-family:'Liberation Sans', sans-serif;font-size:19.3px;line-height:23.16px;font-weight:normal;color:#444;">67</div>
<div style="left:62.00px;top:1019.00px;width:36.00px;height:1.00px;background:#DCDCDC;"></div>
<div class="t" style="left:-371.00px;top:995.65px;width:900px;text-align:center;font-family:'Liberation Sans', sans-serif;font-size:19.3px;line-height:23.16px;font-weight:normal;color:#444;">68</div>
<div style="left:62.00px;top:1047.00px;width:36.00px;height:1.00px;background:#DCDCDC;"></div>
<div class="t" style="left:-371.00px;top:1023.69px;width:900px;text-align:center;font-family:'Liberation Sans', sans-serif;font-size:19.3px;line-height:23.16px;font-weight:normal;color:#444;">69</div>
<div style="left:62.00px;top:1075.00px;width:36.00px;height:1.00px;background:#DCDCDC;"></div>
<div class="t" style="left:-371.00px;top:1051.73px;width:900px;text-align:center;font-family:'Liberation Sans', sans-serif;font-size:19.3px;line-height:23.16px;font-weight:normal;color:#444;">70</div>
<div style="left:62.00px;top:1103.00px;width:36.00px;height:1.00px;background:#DCDCDC;"></div>
<div class="t" style="left:-371.00px;top:1079.77px;width:900px;text-align:center;font-family:'Liberation Sans', sans-serif;font-size:19.3px;line-height:23.16px;font-weight:normal;color:#444;">71</div>
<div style="left:62.00px;top:1131.00px;width:36.00px;height:1.00px;background:#DCDCDC;"></div>
<div class="t" style="left:-371.00px;top:1107.81px;width:900px;text-align:center;font-family:'Liberation Sans', sans-serif;font-size:19.3px;line-height:23.16px;font-weight:normal;color:#444;">72</div>
<div style="left:62.00px;top:1159.00px;width:36.00px;height:1.00px;background:#DCDCDC;"></div>
<div class="t" style="left:-371.00px;top:1135.85px;width:900px;text-align:center;font-family:'Liberation Sans', sans-serif;font-size:19.3px;line-height:23.16px;font-weight:normal;color:#444;">73</div>
<div style="left:98px;top:86px;width:142px;height:57px;background:#fff;box-sizing:border-box;border-style:solid;border-color:#1E7145;border-width:5px 3px 3px 5px"></div>
<div class="t" style="left:-279.00px;top:106.34px;width:900px;text-align:center;font-family:'Liberation Sans', sans-serif;font-size:23.2px;line-height:27.84px;font-weight:normal;color:#1E7145;transform:scaleX(1.0072463768115942);transform-origin:center 0;">&lt; Start</div>
<div style="left:240.00px;top:114.00px;width:41.00px;height:2.00px;background:#1E7145;"></div>
<div style="left:280.00px;top:114.00px;width:2.00px;height:29.00px;background:#1E7145;"></div>
<div style="left:277.00px;top:140.00px;width:6.00px;height:3.00px;background:#1E7145;"></div>
<div style="left:65px;top:2px;width:27px;height:27px;box-sizing:border-box;border:1px solid #6E6E6E;box-shadow:inset 0 0 0 1px #fff;background:#E6E6E6"></div>
<div class="t" style="left:-371.50px;top:9.14px;width:900px;text-align:center;font-family:'Liberation Sans', sans-serif;font-size:12px;line-height:14.40px;font-weight:normal;color:#3A3A3A;">1</div>
<div style="left:65px;top:29px;width:27px;height:27px;box-sizing:border-box;border:1px solid #6E6E6E;box-shadow:inset 0 0 0 1px #fff;background:#E6E6E6"></div>
<div class="t" style="left:-371.50px;top:36.14px;width:900px;text-align:center;font-family:'Liberation Sans', sans-serif;font-size:12px;line-height:14.40px;font-weight:normal;color:#3A3A3A;">2</div>
<div style="left:65.00px;top:28.00px;width:27.00px;height:2.00px;background:#6E6E6E;"></div>
<div style="left:2px;top:59px;width:27px;height:27px;box-sizing:border-box;border:1px solid #6E6E6E;box-shadow:inset 0 0 0 1px #fff;background:#E6E6E6"></div>
<div class="t" style="left:-434.50px;top:66.14px;width:900px;text-align:center;font-family:'Liberation Sans', sans-serif;font-size:12px;line-height:14.40px;font-weight:normal;color:#3A3A3A;">1</div>
<div style="left:29px;top:59px;width:27px;height:27px;box-sizing:border-box;border:1px solid #6E6E6E;box-shadow:inset 0 0 0 1px #fff;background:#E6E6E6"></div>
<div class="t" style="left:-407.50px;top:66.14px;width:900px;text-align:center;font-family:'Liberation Sans', sans-serif;font-size:12px;line-height:14.40px;font-weight:normal;color:#3A3A3A;">2</div>
<div style="left:28.00px;top:59.00px;width:2.00px;height:27.00px;background:#6E6E6E;"></div>
<div style="left:1194.00px;top:12.00px;width:1335.00px;height:2.00px;background:#A0A0A0;"></div>
<div style="left:1194.00px;top:12.00px;width:2.00px;height:6.00px;background:#A0A0A0;"></div>
<div style="left:1264.00px;top:39.00px;width:2.00px;height:2.00px;background:#8C8C8C;"></div>
<div style="left:1410.00px;top:39.00px;width:2.00px;height:2.00px;background:#8C8C8C;"></div>
<div style="left:1556.00px;top:39.00px;width:2.00px;height:2.00px;background:#8C8C8C;"></div>
<div style="left:1702.00px;top:39.00px;width:2.00px;height:2.00px;background:#8C8C8C;"></div>
<div style="left:1848.00px;top:39.00px;width:2.00px;height:2.00px;background:#8C8C8C;"></div>
<div style="left:1994.00px;top:39.00px;width:2.00px;height:2.00px;background:#8C8C8C;"></div>
<div style="left:2140.00px;top:39.00px;width:2.00px;height:2.00px;background:#8C8C8C;"></div>
<div style="left:2286.00px;top:39.00px;width:2.00px;height:2.00px;background:#8C8C8C;"></div>
<div style="left:2432.00px;top:39.00px;width:2.00px;height:2.00px;background:#8C8C8C;"></div>
<div style="left:12.00px;top:880.00px;width:2.00px;height:269.00px;background:#A0A0A0;"></div>
<div style="left:12.00px;top:880.00px;width:6.00px;height:2.00px;background:#A0A0A0;"></div>
<div style="left:39.00px;top:892.00px;width:2.00px;height:2.00px;background:#969696;"></div>
<div style="left:39.00px;top:921.00px;width:2.00px;height:2.00px;background:#969696;"></div>
<div style="left:39.00px;top:949.00px;width:2.00px;height:2.00px;background:#969696;"></div>
<div style="left:39.00px;top:977.00px;width:2.00px;height:2.00px;background:#969696;"></div>
<div style="left:39.00px;top:1005.00px;width:2.00px;height:2.00px;background:#969696;"></div>
<div style="left:39.00px;top:1033.00px;width:2.00px;height:2.00px;background:#969696;"></div>
<div style="left:39.00px;top:1061.00px;width:2.00px;height:2.00px;background:#969696;"></div>
<div style="left:39.00px;top:1089.00px;width:2.00px;height:2.00px;background:#969696;"></div>
<div style="left:39.00px;top:1117.00px;width:2.00px;height:2.00px;background:#969696;"></div>
<div style="left:39.00px;top:1145.00px;width:2.00px;height:2.00px;background:#969696;"></div>
<div style="left:2529.00px;top:0.00px;width:31.00px;height:1149.00px;background:#F3F3F3;"></div>
<div style="left:2529.00px;top:0.00px;width:1.00px;height:1149.00px;background:#A8A8A8;"></div>
<svg style="position:absolute;left:2537px;top:7px" width="16" height="12"><polygon points="8,1.8 14,10 2,10" fill="#7A7A7A" stroke="#7A7A7A" stroke-width="1.5" stroke-linejoin="round"/></svg>
<div style="left:2539px;top:220px;width:12px;height:194px;border-radius:6px;background:#737373"></div>
<svg style="position:absolute;left:2537px;top:1132px" width="16" height="12"><polygon points="2,1.8 14,1.8 8,10" fill="#7A7A7A" stroke="#7A7A7A" stroke-width="1.5" stroke-linejoin="round"/></svg>
<div style="left:0.00px;top:1149.00px;width:2560.00px;height:34.00px;background:#F3F3F3;"></div>
<div style="left:0.00px;top:1149.00px;width:2530.00px;height:1.00px;background:#B4B4B4;"></div>
<svg style="position:absolute;left:28px;top:1158px" width="10" height="16"><polygon points="7.5,1 7.5,14 1,7.5" fill="#C0C0C0"/></svg>
<svg style="position:absolute;left:63px;top:1158px" width="10" height="16"><polygon points="1,1 1,14 7.5,7.5" fill="#1E7145"/></svg>
<div style="left:118.00px;top:1153.00px;width:1.00px;height:25.00px;background:#C8C8C8;"></div>
<div style="left:189.00px;top:1153.00px;width:1.00px;height:25.00px;background:#C8C8C8;"></div>
<div style="left:290.00px;top:1153.00px;width:1.00px;height:25.00px;background:#C8C8C8;"></div>
<div style="left:417.00px;top:1153.00px;width:1.00px;height:25.00px;background:#C8C8C8;"></div>
<div class="t" style="left:132.00px;top:1152.54px;width:900px;text-align:left;font-family:'Liberation Sans', sans-serif;font-size:19.5px;line-height:23.40px;font-weight:normal;color:#444;transform:scaleX(1.0097087378640777);transform-origin:left 0;">Start</div>
<div class="t" style="left:206.00px;top:1152.54px;width:900px;text-align:left;font-family:'Liberation Sans', sans-serif;font-size:19.5px;line-height:23.40px;font-weight:normal;color:#444;transform:scaleX(0.9747023809523809);transform-origin:left 0;">1. Initial</div>
<div class="t" style="left:306.00px;top:1152.54px;width:900px;text-align:left;font-family:'Liberation Sans', sans-serif;font-size:19.5px;line-height:23.40px;font-weight:normal;color:#444;transform:scaleX(0.9978791092258749);transform-origin:left 0;">2. Growing</div>
<div class="t" style="left:440.00px;top:1152.54px;width:900px;text-align:left;font-family:'Liberation Sans', sans-serif;font-size:19.5px;line-height:23.40px;font-weight:normal;color:#444;transform:scaleX(0.9774834437086093);transform-origin:left 0;">3. Revenue &amp; Gross Profit</div>
<div style="left:686px;top:1149px;width:194px;height:31px;background:#fff;box-sizing:border-box;border-left:1px solid #C6C6C6;border-right:1px solid #C6C6C6"></div>
<div style="left:686.00px;top:1177.00px;width:195.00px;height:3.00px;background:#1E7145;"></div>
<div class="t" style="left:333.00px;top:1152.54px;width:900px;text-align:center;font-family:'Liberation Sans', sans-serif;font-size:19.5px;line-height:23.40px;font-weight:bold;color:#1E7145;">4. SG&amp;A &amp; CAPEX</div>
<div class="t" style="left:897.00px;top:1152.54px;width:900px;text-align:left;font-family:'Liberation Sans', sans-serif;font-size:19.5px;line-height:23.40px;font-weight:normal;color:#444;transform:scaleX(0.9470319634703197);transform-origin:left 0;">5. Personnel</div>
<div style="left:1020.00px;top:1153.00px;width:1.00px;height:25.00px;background:#C8C8C8;"></div>
<div class="t" style="left:1040.00px;top:1152.54px;width:900px;text-align:left;font-family:'Liberation Sans', sans-serif;font-size:19.5px;line-height:23.40px;font-weight:normal;color:#444;transform:scaleX(0.9872151195108393);transform-origin:left 0;">6. Income Statement</div>
<div style="left:1240.00px;top:1153.00px;width:1.00px;height:25.00px;background:#C8C8C8;"></div>
<div class="t" style="left:1264.00px;top:1152.54px;width:900px;text-align:left;font-family:'Liberation Sans', sans-serif;font-size:19.5px;line-height:23.40px;font-weight:normal;color:#444;transform:scaleX(1.0132325141776937);transform-origin:left 0;">6.1 Income Statement monthly</div>
<div style="left:1556.00px;top:1153.00px;width:1.00px;height:25.00px;background:#C8C8C8;"></div>
<div class="t" style="left:1574.00px;top:1152.54px;width:900px;text-align:left;font-family:'Liberation Sans', sans-serif;font-size:19.5px;line-height:23.40px;font-weight:normal;color:#444;transform:scaleX(0.9255060728744939);transform-origin:left 0;">7. Cash Flows</div>
<div style="left:1706.00px;top:1153.00px;width:1.00px;height:25.00px;background:#C8C8C8;"></div>
<div class="t" style="left:1728.00px;top:1152.54px;width:900px;text-align:left;font-family:'Liberation Sans', sans-serif;font-size:19.5px;line-height:23.40px;font-weight:normal;color:#444;transform:scaleX(0.9764536280634311);transform-origin:left 0;">7.1 Cash Flows monthly</div>
<div style="left:1959.00px;top:1168.00px;width:3.00px;height:3.00px;background:#1E6B3A;"></div>
<div style="left:1965.00px;top:1168.00px;width:3.00px;height:3.00px;background:#1E6B3A;"></div>
<div style="left:1971.00px;top:1168.00px;width:3.00px;height:3.00px;background:#1E6B3A;"></div>
<svg style="position:absolute;left:1988px;top:1154px" width="24" height="24"><circle cx="12" cy="12" r="10.3" fill="none" stroke="#707070" stroke-width="1.8"/><path d="M12 6.5V17.5M6.5 12H17.5" stroke="#606060" stroke-width="1.8"/></svg>
<div style="left:2034.00px;top:1158.00px;width:2.00px;height:2.00px;background:#A8A8A8;"></div>
<div style="left:2034.00px;top:1164.00px;width:2.00px;height:2.00px;background:#A8A8A8;"></div>
<div style="left:2034.00px;top:1170.00px;width:2.00px;height:2.00px;background:#A8A8A8;"></div>
<svg style="position:absolute;left:2058px;top:1157px" width="13" height="16"><polygon points="11,1.5 11,14.5 2,8" fill="#6E6E6E" stroke="#6E6E6E" stroke-width="1.5" stroke-linejoin="round"/></svg>
<div style="left:2078px;top:1159px;width:26px;height:12px;border-radius:6px;background:#6E6E6E"></div>
<svg style="position:absolute;left:2511px;top:1157px" width="13" height="16"><polygon points="1.5,1.5 1.5,14.5 10,8" fill="#6E6E6E" stroke="#6E6E6E" stroke-width="1.5" stroke-linejoin="round"/></svg>
</body></html>
